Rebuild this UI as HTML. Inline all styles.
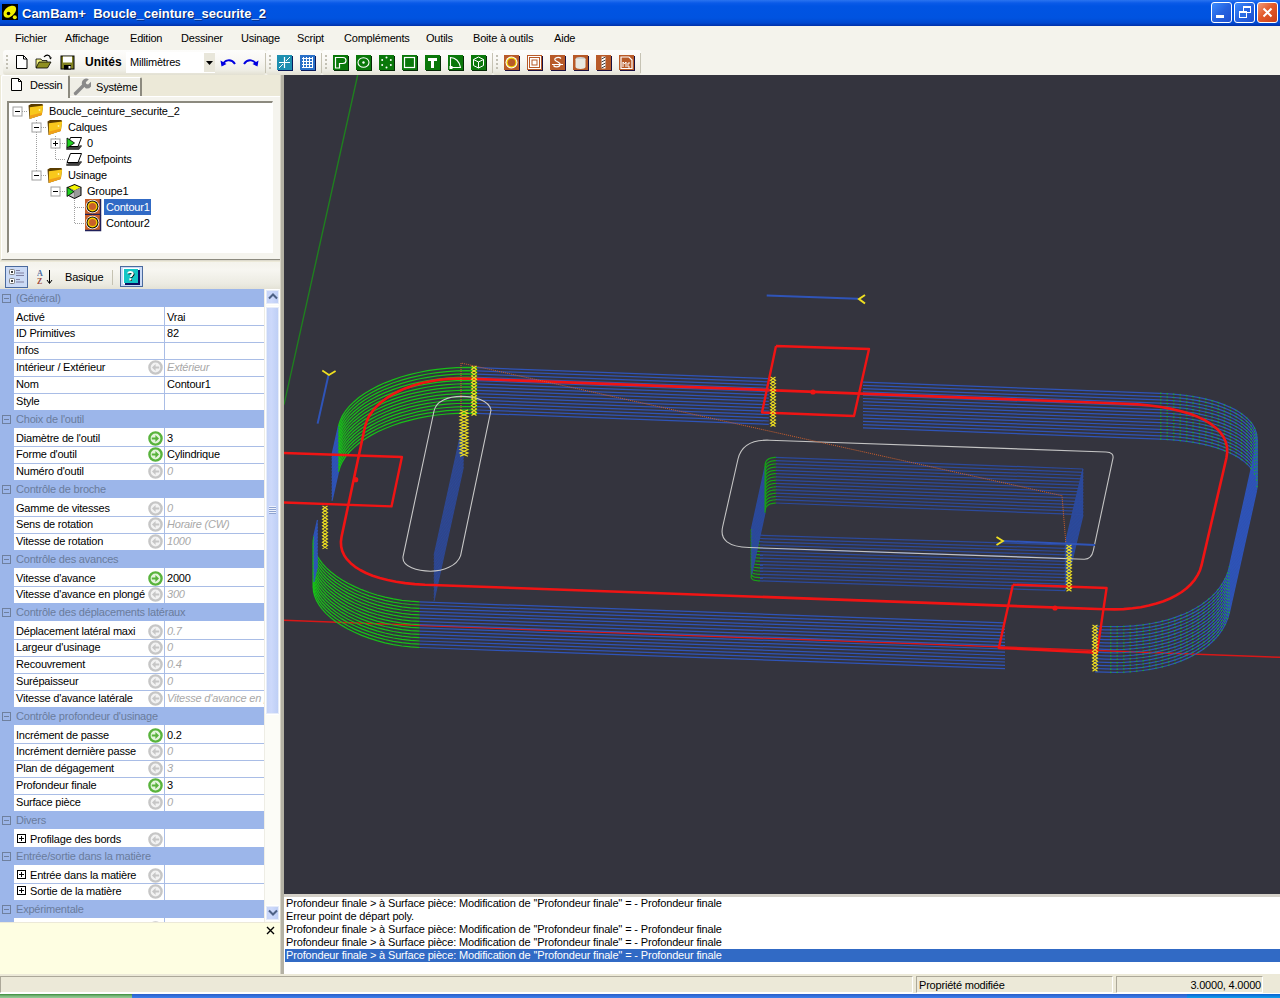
<!DOCTYPE html>
<html><head><meta charset="utf-8"><style>
*{box-sizing:border-box;margin:0;padding:0}
html,body{width:1280px;height:998px;overflow:hidden;background:#ece9d8;font-family:"Liberation Sans",sans-serif;font-size:11px;color:#000;letter-spacing:-0.2px}
.a{position:absolute}
.nw{white-space:nowrap}
#title{left:0;top:0;width:1280px;height:26px;background:linear-gradient(#2a74f0 0,#0a5ae8 3px,#0054e3 6px,#0053e0 18px,#0048d0 23px,#0030a8 26px)}
#title .t{left:22px;top:6px;color:#fff;font-weight:bold;font-size:13px;letter-spacing:0;text-shadow:1px 1px 0 #0a246a}
.wb{position:absolute;top:2px;width:21px;height:21px;border:1px solid #fff;border-radius:3px}
#menu{left:0;top:26px;width:1280px;height:49px;background:#f4f3ec}
#menu span{position:absolute;top:6px}
.tbar{position:absolute;top:24px;height:25px;background:linear-gradient(#fdfdfb 0,#f9f8f4 40%,#efeee6 80%,#e2e0d2 100%);border-radius:3px}
.tbar:after{content:"";position:absolute;right:0;top:3px;width:1px;height:20px;background:#c6c3b4}
.grip{position:absolute;top:5px;width:2px;height:14px;background:repeating-linear-gradient(#c2c0b4 0 2px,transparent 2px 4px)}
.ti{position:absolute;top:5px;width:16px;height:16px}
#left{left:0;top:75px;width:281px;height:899px;background:#ece9d8}
#vp{left:284px;top:75px;width:996px;height:819px;background:#34343e;overflow:hidden}
.ll{position:absolute;left:1px;height:13px;line-height:13px;white-space:nowrap;padding-left:1px;letter-spacing:-0.16px}
.cat{position:absolute;left:0;width:264px;height:18px;background:#9cb6ea;color:#6a7c9c}
.cat .tx{position:absolute;left:16px;top:3px;white-space:nowrap}
.cat .bx{position:absolute;left:2px;top:5px;width:9px;height:9px;border:1px solid #6f809e}
.cat .bx:after{content:"";position:absolute;left:1px;top:3px;width:5px;height:1px;background:#6f809e}
.row{position:absolute;left:0;width:264px;height:17px;background:#fff;border-left:14px solid #9cb6ea}
.ln{position:absolute;left:0;top:0;width:250px;height:1px;background:#a9bde6}
.vl{position:absolute;left:150px;top:0;width:1px;height:100%;background:#a9bde6}
.row .n{position:absolute;left:0;top:0;width:134px;height:16px;padding-left:2px;line-height:16px;white-space:nowrap;overflow:visible}
.row .v{position:absolute;left:151px;top:0;width:99px;height:16px;padding-left:2px;line-height:16px;white-space:nowrap;overflow:hidden}
.row .g{color:#a8a8a8;font-style:italic}
.ic{position:absolute;left:134px;top:1px;width:15px;height:15px;background:#fff}
.pl{position:absolute;left:3px;top:3px;width:9px;height:9px;border:1px solid #000}
.pl:before{content:"";position:absolute;left:1px;top:3px;width:5px;height:1px;background:#000}
.pl:after{content:"";position:absolute;left:3px;top:1px;width:1px;height:5px;background:#000}
.tt{line-height:16px;white-space:nowrap}
.sp{position:absolute;top:2px;height:17px;border:1px solid;border-color:#aca899 #fff #fff #aca899;padding:2px 0 0 2px;white-space:nowrap}
</style></head><body>
<div id="title" class="a"><svg class="a" style="left:2px;top:4px" width="16" height="16" viewBox="0 0 16 16"><rect width="16" height="16" fill="#000"/><path d="M1.5 10c0-3.5 3.5-7.5 8-8.2c3.2-0.5 5 1.2 4.6 3.8c-0.4 3.2-3 6.5-6.8 7.8c-3.2 1-5.8-0.4-5.8-3.4z" fill="#f2f000"/><circle cx="6.5" cy="9.5" r="1.8" fill="#000"/><circle cx="12.8" cy="13.2" r="2" fill="#f2f000"/></svg><div class="a t nw">CamBam+&nbsp; Boucle_ceinture_securite_2</div><div class="wb" style="left:1211px;background:linear-gradient(135deg,#3c8cff 0%,#2663e0 50%,#1d4fd0 100%)"><div class="a" style="left:4px;top:12px;width:8px;height:3px;background:#fff"></div></div><div class="wb" style="left:1234px;background:linear-gradient(135deg,#3c8cff 0%,#2663e0 50%,#1d4fd0 100%)"><div class="a" style="left:8px;top:3px;width:8px;height:7px;border:1px solid #fff;border-top-width:2px"></div><div class="a" style="left:4px;top:8px;width:8px;height:7px;border:1px solid #fff;border-top-width:2px;background:#2a6be4"></div></div><div class="wb" style="left:1257px;background:linear-gradient(135deg,#f09a7a 0%,#e35a2a 45%,#c8401a 100%)"><svg class="a" style="left:4px;top:4px" width="11" height="11"><path d="M1.5 1.5l8 8M9.5 1.5l-8 8" stroke="#fff" stroke-width="2"/></svg></div></div>
<div id="menu" class="a"><span class="nw" style="left:15px">Fichier</span><span class="nw" style="left:65px">Affichage</span><span class="nw" style="left:130px">Edition</span><span class="nw" style="left:181px">Dessiner</span><span class="nw" style="left:241px">Usinage</span><span class="nw" style="left:297px">Script</span><span class="nw" style="left:344px">Compléments</span><span class="nw" style="left:426px">Outils</span><span class="nw" style="left:473px">Boite à outils</span><span class="nw" style="left:554px">Aide</span><div class="tbar" style="left:3px;width:263px"></div><div class="grip" style="left:6px;top:29px"></div><div class="tbar" style="left:266px;width:56px"></div><div class="grip" style="left:269px;top:29px"></div><div class="tbar" style="left:322px;width:171px"></div><div class="grip" style="left:325px;top:29px"></div><div class="tbar" style="left:493px;width:148px"></div><div class="grip" style="left:496px;top:29px"></div></div>
<svg class="a" style="left:16px;top:55px" width="12" height="14" viewBox="0 0 12 14"><path d="M0.5 0.5h7l3.5 3.5v9.5h-10.5z" fill="#fff" stroke="#000"/><path d="M7.5 0.5v3.5h3.5" fill="none" stroke="#000"/></svg><svg class="a" style="left:35px;top:54px" width="18" height="15" viewBox="0 0 18 15"><path d="M1 5h5l1 1.5h5v7h-11z" fill="#f0f080" stroke="#000" stroke-width="0.8"/><path d="M1 14l3-6h12l-3.5 6z" fill="#8f8f20" stroke="#000" stroke-width="0.8"/><path d="M9 3c2-2.5 5-2.5 6.5 0.5" fill="none" stroke="#000" stroke-width="1.2"/><path d="M14 3.5h3l-1.5 2z" fill="#000"/></svg><svg class="a" style="left:60px;top:55px" width="15" height="15" viewBox="0 0 15 15"><rect x="0.5" y="0.5" width="14" height="14" fill="#000"/><rect x="1.5" y="1.5" width="12" height="12" fill="#808020"/><rect x="3" y="1.5" width="9" height="6" fill="#fff"/><rect x="4" y="10" width="7" height="4.5" fill="#000"/><rect x="8.5" y="11" width="2" height="2.5" fill="#fff"/></svg><div class="a nw" style="left:85px;top:55px;font-weight:bold;font-size:12px;letter-spacing:0">Unités</div><div class="a" style="left:126px;top:52px;width:89px;height:21px;background:#fff"></div><div class="a" style="left:204px;top:53px;width:11px;height:19px;background:#e8e6da"></div><div class="a nw" style="left:130px;top:56px">Millimètres</div><svg class="a" style="left:206px;top:61px" width="7" height="4" viewBox="0 0 7 4"><path d="M0 0h7l-3.5 4z" fill="#000"/></svg><svg class="a" style="left:220px;top:56px" width="16" height="11" viewBox="0 0 16 11"><path d="M3 9c1-5 8-7 12-1" fill="none" stroke="#0000e0" stroke-width="2"/><path d="M0.5 4.5l1 6l5-2.5z" fill="#0000e0"/></svg><svg class="a" style="left:243px;top:56px" width="16" height="11" viewBox="0 0 16 11"><path d="M13 9c-1-5-8-7-12-1" fill="none" stroke="#0000e0" stroke-width="2"/><path d="M15.5 4.5l-1 6l-5-2.5z" fill="#0000e0"/></svg><svg class="a" style="left:277px;top:55px" width="16" height="16" viewBox="0 0 16 16"><rect x="1" y="1" width="15" height="15" fill="#0a1a5a"/><rect x="0" y="0" width="15" height="15" fill="#1e8fb0"/><path d="M7.5 2v11M2 7.5h11" stroke="#fff" stroke-width="1.2"/><path d="M9 6l4-4M6 9l-4 4" stroke="#fff" stroke-width="1"/></svg><svg class="a" style="left:300px;top:55px" width="16" height="16" viewBox="0 0 16 16"><rect x="1" y="1" width="15" height="15" fill="#0a1a5a"/><rect x="0" y="0" width="15" height="15" fill="#2a70c8"/><path d="M2 3.5h11M2 6.5h11M2 9.5h11M2 12.5h11M3.5 2v11M6.5 2v11M9.5 2v11M12.5 2v11" stroke="#fff" stroke-width="1"/></svg><svg class="a" style="left:333px;top:55px" width="16" height="16" viewBox="0 0 16 16"><rect x="1" y="1" width="15" height="15" fill="#062a06"/><rect x="0" y="0" width="15" height="15" fill="#0a780a"/><path d="M2.5 2.5h7.5a3 3 0 0 1 0 6h-3.5v4.5h-4z" fill="none" stroke="#fff" stroke-width="1.2"/></svg><svg class="a" style="left:356px;top:55px" width="16" height="16" viewBox="0 0 16 16"><rect x="1" y="1" width="15" height="15" fill="#062a06"/><rect x="0" y="0" width="15" height="15" fill="#0a780a"/><ellipse cx="7.5" cy="7.5" rx="5.5" ry="4.8" fill="none" stroke="#fff" stroke-width="1.1"/><circle cx="7.5" cy="7.5" r="1.2" fill="#fff"/></svg><svg class="a" style="left:379px;top:55px" width="16" height="16" viewBox="0 0 16 16"><rect x="1" y="1" width="15" height="15" fill="#062a06"/><rect x="0" y="0" width="15" height="15" fill="#0a780a"/><g fill="#fff"><circle cx="7.5" cy="2.5" r="1"/><circle cx="3.2" cy="5" r="1"/><circle cx="11.8" cy="5" r="1"/><circle cx="3.2" cy="10" r="1"/><circle cx="11.8" cy="10" r="1"/><circle cx="7.5" cy="12.5" r="1"/></g></svg><svg class="a" style="left:402px;top:55px" width="16" height="16" viewBox="0 0 16 16"><rect x="1" y="1" width="15" height="15" fill="#062a06"/><rect x="0" y="0" width="15" height="15" fill="#0a780a"/><rect x="2.5" y="2.5" width="10" height="10" fill="none" stroke="#fff" stroke-width="1.2"/></svg><svg class="a" style="left:425px;top:55px" width="16" height="16" viewBox="0 0 16 16"><rect x="1" y="1" width="15" height="15" fill="#062a06"/><rect x="0" y="0" width="15" height="15" fill="#0a780a"/><path d="M3 3h9v3h-3v7h-3v-7h-3z" fill="#fff"/></svg><svg class="a" style="left:448px;top:55px" width="16" height="16" viewBox="0 0 16 16"><rect x="1" y="1" width="15" height="15" fill="#062a06"/><rect x="0" y="0" width="15" height="15" fill="#0a780a"/><path d="M2.5 12.5v-10c5 0 9 4 10 10z" fill="none" stroke="#fff" stroke-width="1.1"/><rect x="1.5" y="11" width="3" height="3" fill="#fff"/></svg><svg class="a" style="left:471px;top:55px" width="16" height="16" viewBox="0 0 16 16"><rect x="1" y="1" width="15" height="15" fill="#062a06"/><rect x="0" y="0" width="15" height="15" fill="#0a780a"/><path d="M7.5 2l5 2.5v6l-5 2.5l-5-2.5v-6z M2.5 4.5l5 2.5l5-2.5 M7.5 7v6" fill="none" stroke="#fff" stroke-width="1"/></svg><svg class="a" style="left:504px;top:55px" width="16" height="16" viewBox="0 0 16 16"><rect x="1" y="1" width="15" height="15" fill="#1a1040"/><rect x="0" y="0" width="15" height="15" fill="#b85a28"/><circle cx="7.5" cy="7.5" r="6" fill="#fff"/><circle cx="7.5" cy="7.5" r="5" fill="#f0d000"/><circle cx="7.5" cy="7.5" r="3.8" fill="#b85a28"/></svg><svg class="a" style="left:527px;top:55px" width="16" height="16" viewBox="0 0 16 16"><rect x="1" y="1" width="15" height="15" fill="#1a1040"/><rect x="0" y="0" width="15" height="15" fill="#fff"/><rect x="0.5" y="0.5" width="14" height="14" fill="none" stroke="#b85a28"/><rect x="2.5" y="2.5" width="10" height="10" fill="none" stroke="#b85a28"/><rect x="5" y="5" width="5" height="5" fill="none" stroke="#b85a28"/></svg><svg class="a" style="left:550px;top:55px" width="16" height="16" viewBox="0 0 16 16"><rect x="1" y="1" width="15" height="15" fill="#1a1040"/><rect x="0" y="0" width="15" height="15" fill="#b85a28"/><path d="M11 3.5c-2-2-7-1-6 1.5c1 2 6 2 5 5c-0.8 2.5-5 2.5-6.5 0.5" fill="none" stroke="#fff" stroke-width="1.3"/><path d="M2 9.5h11" stroke="#fff" stroke-width="1"/></svg><svg class="a" style="left:573px;top:55px" width="16" height="16" viewBox="0 0 16 16"><rect x="1" y="1" width="15" height="15" fill="#1a1040"/><rect x="0" y="0" width="15" height="15" fill="#b85a28"/><ellipse cx="7.5" cy="4" rx="5" ry="2" fill="#d0d0d0"/><path d="M2.5 4v8c0 2.5 10 2.5 10 0v-8" fill="#e8e8e0"/></svg><svg class="a" style="left:596px;top:55px" width="16" height="16" viewBox="0 0 16 16"><rect x="1" y="1" width="15" height="15" fill="#1a1040"/><rect x="0" y="0" width="15" height="15" fill="#b85a28"/><rect x="5.5" y="1.5" width="4" height="12" fill="#fff"/><path d="M5.5 4l4-2M5.5 7l4-2M5.5 10l4-2M5.5 13l4-2" stroke="#404040" stroke-width="1"/></svg><svg class="a" style="left:619px;top:55px" width="16" height="16" viewBox="0 0 16 16"><rect x="1" y="1" width="15" height="15" fill="#1a1040"/><rect x="0" y="0" width="15" height="15" fill="#b85a28"/><path d="M2 2h8l3 3v8.5h-11z" fill="none" stroke="#fff" stroke-width="1.2"/><path d="M4 12v-5l1.5 2l1.5-2v5M11 8h-2v4h2" fill="none" stroke="#fff" stroke-width="1"/></svg>
<div id="left" class="a"></div><div class="a" style="left:1px;top:96px;width:280px;height:164px;background:#f5f4ee;border-left:1px solid #fff;border-top:1px solid #fff;border-right:1px solid #8c8a7f;border-bottom:1px solid #8c8a7f"></div><div class="a" style="left:1px;top:260px;width:280px;height:1px;background:#dcd9cc"></div><div class="a" style="left:1px;top:75px;width:69px;height:23px;background:#f5f4ee;border-left:1px solid #fff;border-top:1px solid #fff;border-right:2px solid #8c8a7f;border-radius:2px 2px 0 0"></div><div class="a" style="left:70px;top:77px;width:72px;height:19px;background:#efeee6;border-top:1px solid #fff;border-right:2px solid #8c8a7f;border-radius:0 2px 0 0"></div><svg class="a" style="left:11px;top:78px" width="11" height="13" viewBox="0 0 11 13"><path d="M0.5 0.5h7l3 3v9h-10z" fill="#fff" stroke="#000"/><path d="M7.5 0.5v3h3" fill="none" stroke="#000"/></svg><div class="a nw" style="left:30px;top:79px">Dessin</div><svg class="a" style="left:73px;top:78px" width="18" height="18" viewBox="0 0 18 18"><path d="M2.5 15.5l8.5-8.5" stroke="#8a8a8a" stroke-width="3.4" stroke-linecap="round"/><path d="M9 6.5a4.6 4.6 0 0 1 6.8-5.2l-3 3l0.5 1.8l1.8 0.5l3-3a4.6 4.6 0 0 1-5.2 6.8z" fill="#8a8a8a"/></svg><div class="a nw" style="left:96px;top:81px">Système</div><div class="a" style="left:7px;top:101px;width:266px;height:152px;background:#fff;border-top:2px solid #8c8a7f;border-left:2px solid #8c8a7f;border-right:1px solid #fff;border-bottom:1px solid #fff"></div><svg class="a" style="left:0px;top:0px" width="281" height="260" viewBox="0 0 281 260"><path d="M36.5 120v55M55.5 136v23M74.5 200v23" stroke="#a0a0a0" stroke-dasharray="1 1" stroke-width="1" fill="none"/><path d="M22 111.5h6M41 127.5h6M41 175.5h6M60 143.5h6M56 159.5h10M60 191.5h6M75 207.5h10M75 223.5h10" stroke="#a0a0a0" stroke-dasharray="1 1" stroke-width="1" fill="none"/><rect x="13.0" y="107.0" width="9" height="9" fill="#fff" stroke="#a0a0a0"/><path d="M15.0 111.5h5" stroke="#000"/><rect x="32.0" y="123.0" width="9" height="9" fill="#fff" stroke="#a0a0a0"/><path d="M34.0 127.5h5" stroke="#000"/><rect x="51.0" y="139.0" width="9" height="9" fill="#fff" stroke="#a0a0a0"/><path d="M53.0 143.5h5" stroke="#000"/><path d="M55.5 141.0v5" stroke="#000"/><rect x="32.0" y="171.0" width="9" height="9" fill="#fff" stroke="#a0a0a0"/><path d="M34.0 175.5h5" stroke="#000"/><rect x="51.0" y="187.0" width="9" height="9" fill="#fff" stroke="#a0a0a0"/><path d="M53.0 191.5h5" stroke="#000"/><g transform="translate(28,103)"><path d="M0.5 2.5L3 1h11.5l0.5 1.5l-1.2 9.5l-12.3 4z" fill="#5a3c00"/><path d="M1.8 4.2l13.4-1.6l-1.3 9.2l-12 4z" fill="#f8c81c"/><path d="M1.9 12.5l12.2-3l-0.3 2.4l-11.9 3.9z" fill="#f0a018"/><circle cx="11.5" cy="7" r="0.9" fill="#fff6a0"/></g><g transform="translate(47,119)"><path d="M0.5 2.5L3 1h11.5l0.5 1.5l-1.2 9.5l-12.3 4z" fill="#5a3c00"/><path d="M1.8 4.2l13.4-1.6l-1.3 9.2l-12 4z" fill="#f8c81c"/><path d="M1.9 12.5l12.2-3l-0.3 2.4l-11.9 3.9z" fill="#f0a018"/><circle cx="11.5" cy="7" r="0.9" fill="#fff6a0"/></g><g transform="translate(66,135)"><path d="M0.5 14.5l3-4h12l-2.5 4z" fill="#404040"/><path d="M4.5 2.5h11l-3.5 9h-11z" fill="#fff" stroke="#000"/><path d="M1 12.5v1.5h11.5l3-3.5" fill="none" stroke="#404040" stroke-width="1.5"/><path d="M1 3v10l7.5-5z" fill="#20d020" stroke="#000" stroke-width="0.8"/></g><g transform="translate(66,151)"><path d="M0.5 14.5l3-4h12l-2.5 4z" fill="#404040"/><path d="M4.5 2.5h11l-3.5 9h-11z" fill="#fff" stroke="#000"/><path d="M1 12.5v1.5h11.5l3-3.5" fill="none" stroke="#404040" stroke-width="1.5"/></g><g transform="translate(47,167)"><path d="M0.5 2.5L3 1h11.5l0.5 1.5l-1.2 9.5l-12.3 4z" fill="#5a3c00"/><path d="M1.8 4.2l13.4-1.6l-1.3 9.2l-12 4z" fill="#f8c81c"/><path d="M1.9 12.5l12.2-3l-0.3 2.4l-11.9 3.9z" fill="#f0a018"/><circle cx="11.5" cy="7" r="0.9" fill="#fff6a0"/></g><g transform="translate(66,183)"><path d="M8.5 1l7 3v8.5l-7 3.5l-7-3.5v-8.5z" fill="#000"/><path d="M8.5 2l6 2.5l-6 3l-6-3z" fill="#f5f500"/><path d="M8.5 7.5l6-3v7.5l-6 3z" fill="#9a9a9a"/><path d="M2.5 4.5l6 3v7.5l-6-3z" fill="#c0c0c0"/><path d="M1 4v9.5l7-4.8z" fill="#20d020" stroke="#000" stroke-width="0.8"/></g><g transform="translate(85,199)"><rect x="0" y="0" width="16" height="16" fill="#c8602a"/><path d="M15.5 0v15.5h-15.5" fill="none" stroke="#20205a" stroke-width="1.5"/><circle cx="7.5" cy="7.5" r="6.8" fill="#fff"/><circle cx="7.5" cy="7.5" r="6" fill="#000"/><circle cx="7.5" cy="7.5" r="5" fill="#f5d000"/><circle cx="7.5" cy="7.5" r="3.6" fill="#c8602a"/></g><g transform="translate(85,215)"><rect x="0" y="0" width="16" height="16" fill="#c8602a"/><path d="M15.5 0v15.5h-15.5" fill="none" stroke="#20205a" stroke-width="1.5"/><circle cx="7.5" cy="7.5" r="6.8" fill="#fff"/><circle cx="7.5" cy="7.5" r="6" fill="#000"/><circle cx="7.5" cy="7.5" r="5" fill="#f5d000"/><circle cx="7.5" cy="7.5" r="3.6" fill="#c8602a"/></g></svg><div class="a" style="left:104px;top:199px;width:47px;height:16px;background:#316ac5"></div><div class="a tt" style="left:49px;top:103px;color:#000">Boucle_ceinture_securite_2</div><div class="a tt" style="left:68px;top:119px;color:#000">Calques</div><div class="a tt" style="left:87px;top:135px;color:#000">0</div><div class="a tt" style="left:87px;top:151px;color:#000">Defpoints</div><div class="a tt" style="left:68px;top:167px;color:#000">Usinage</div><div class="a tt" style="left:87px;top:183px;color:#000">Groupe1</div><div class="a tt" style="left:106px;top:199px;color:#fff">Contour1</div><div class="a tt" style="left:106px;top:215px;color:#000">Contour2</div><div class="a" style="left:0;top:262px;width:280px;height:27px;background:linear-gradient(#f4f3ec,#f7f6f1 30%,#ecebe2 80%,#e4e2d6)"></div><div class="a" style="left:5px;top:266px;width:23px;height:22px;background:#cbdaf5;border:1px solid #4a6a9e"></div><svg class="a" style="left:8px;top:268px" width="18" height="18" viewBox="0 0 18 18"><rect x="1.5" y="1.5" width="5" height="5" rx="1" fill="#fff" stroke="#808080"/><rect x="1.5" y="10.5" width="5" height="5" rx="1" fill="#fff" stroke="#808080"/><path d="M3 4h2M4 3v2M3 13h2M4 12v2" stroke="#000"/><path d="M8 2.5h4M8 5h8M8 7.5h8M8 11.5h4M8 14h8" stroke="#8080a0"/></svg><svg class="a" style="left:37px;top:269px" width="17" height="16" viewBox="0 0 17 16"><text x="0" y="7" font-family="Liberation Serif" font-weight="bold" font-size="8" fill="#4a6aa0">A</text><text x="0" y="15" font-family="Liberation Serif" font-weight="bold" font-size="8" fill="#a04a3a">Z</text><path d="M12.5 1v13" stroke="#000"/><path d="M10 11l2.5 3.5l2.5-3.5" fill="none" stroke="#000"/></svg><div class="a nw" style="left:65px;top:271px">Basique</div><div class="a" style="left:112px;top:270px;width:1px;height:15px;background:#c5c2b2"></div><div class="a" style="left:120px;top:266px;width:23px;height:21px;background:#cbdaf5;border:1px solid #4a6a9e"></div><svg class="a" style="left:123px;top:268px" width="17" height="17" viewBox="0 0 17 17"><rect x="0" y="0" width="16" height="16" fill="#fff"/><rect x="2" y="2" width="15" height="15" fill="#0a1060"/><rect x="1" y="1" width="14" height="14" fill="#14c6c6"/><path d="M6 6.2c0-2 4.5-2.2 4.5 0c0 1.6-2 1.8-2 3.6" fill="none" stroke="#000" stroke-width="2"/><path d="M5.3 5.5c0-2 4.5-2.2 4.5 0c0 1.6-2 1.8-2 3.6" fill="none" stroke="#fff" stroke-width="2"/><rect x="6.8" y="10.8" width="2.2" height="2.2" fill="#000"/><rect x="6.3" y="10.3" width="2.2" height="2.2" fill="#fff"/></svg><div class="a" style="left:0;top:289px;width:264px;height:633px;overflow:hidden;background:#fff"><div class="cat" style="top:0px"><div class="bx"></div><div class="tx">(Général)</div></div><div class="row" style="top:18px;height:18px"><div class="vl"></div><div class="n" style="top:2px;">Activé</div><div class="v" style="top:2px">Vrai</div></div><div class="row" style="top:36px;height:17px"><div class="ln"></div><div class="vl"></div><div class="n" style="top:0px;">ID Primitives</div><div class="v" style="top:0px">82</div></div><div class="row" style="top:53px;height:17px"><div class="ln"></div><div class="vl"></div><div class="n" style="top:0px;">Infos</div><div class="v" style="top:0px"></div></div><div class="row" style="top:70px;height:17px"><div class="ln"></div><div class="vl"></div><div class="n" style="top:0px;">Intérieur / Extérieur</div><div class="ic" style="top:1px"><svg width="15" height="15" viewBox="0 0 15 15"><circle cx="7.5" cy="7.5" r="6.1" fill="#f2f2f2" stroke="#c6c6c6" stroke-width="2.4"/><path d="M11.2 6.4h-3.6v-2.4l-3.6 3.5l3.6 3.5v-2.4h3.6z" fill="#c6c6c6"/></svg></div><div class="v g" style="top:0px">Extérieur</div></div><div class="row" style="top:87px;height:17px"><div class="ln"></div><div class="vl"></div><div class="n" style="top:0px;">Nom</div><div class="v" style="top:0px">Contour1</div></div><div class="row" style="top:104px;height:17px"><div class="ln"></div><div class="vl"></div><div class="n" style="top:0px;">Style</div><div class="v" style="top:0px"></div></div><div class="cat" style="top:121px"><div class="bx"></div><div class="tx">Choix de l'outil</div></div><div class="row" style="top:139px;height:18px"><div class="vl"></div><div class="n" style="top:2px;">Diamètre de l'outil</div><div class="ic" style="top:3px"><svg width="15" height="15" viewBox="0 0 15 15"><circle cx="7.5" cy="7.5" r="6.1" fill="#e4f4dc" stroke="#58b33c" stroke-width="2.4"/><path d="M3.8 6.4h3.6v-2.4l3.6 3.5l-3.6 3.5v-2.4h-3.6z" fill="#58b33c"/></svg></div><div class="v" style="top:2px">3</div></div><div class="row" style="top:157px;height:17px"><div class="ln"></div><div class="vl"></div><div class="n" style="top:0px;">Forme d'outil</div><div class="ic" style="top:1px"><svg width="15" height="15" viewBox="0 0 15 15"><circle cx="7.5" cy="7.5" r="6.1" fill="#e4f4dc" stroke="#58b33c" stroke-width="2.4"/><path d="M3.8 6.4h3.6v-2.4l3.6 3.5l-3.6 3.5v-2.4h-3.6z" fill="#58b33c"/></svg></div><div class="v" style="top:0px">Cylindrique</div></div><div class="row" style="top:174px;height:17px"><div class="ln"></div><div class="vl"></div><div class="n" style="top:0px;">Numéro d'outil</div><div class="ic" style="top:1px"><svg width="15" height="15" viewBox="0 0 15 15"><circle cx="7.5" cy="7.5" r="6.1" fill="#f2f2f2" stroke="#c6c6c6" stroke-width="2.4"/><path d="M11.2 6.4h-3.6v-2.4l-3.6 3.5l3.6 3.5v-2.4h3.6z" fill="#c6c6c6"/></svg></div><div class="v g" style="top:0px">0</div></div><div class="cat" style="top:191px"><div class="bx"></div><div class="tx">Contrôle de broche</div></div><div class="row" style="top:209px;height:18px"><div class="vl"></div><div class="n" style="top:2px;">Gamme de vitesses</div><div class="ic" style="top:3px"><svg width="15" height="15" viewBox="0 0 15 15"><circle cx="7.5" cy="7.5" r="6.1" fill="#f2f2f2" stroke="#c6c6c6" stroke-width="2.4"/><path d="M11.2 6.4h-3.6v-2.4l-3.6 3.5l3.6 3.5v-2.4h3.6z" fill="#c6c6c6"/></svg></div><div class="v g" style="top:2px">0</div></div><div class="row" style="top:227px;height:17px"><div class="ln"></div><div class="vl"></div><div class="n" style="top:0px;">Sens de rotation</div><div class="ic" style="top:1px"><svg width="15" height="15" viewBox="0 0 15 15"><circle cx="7.5" cy="7.5" r="6.1" fill="#f2f2f2" stroke="#c6c6c6" stroke-width="2.4"/><path d="M11.2 6.4h-3.6v-2.4l-3.6 3.5l3.6 3.5v-2.4h3.6z" fill="#c6c6c6"/></svg></div><div class="v g" style="top:0px">Horaire (CW)</div></div><div class="row" style="top:244px;height:17px"><div class="ln"></div><div class="vl"></div><div class="n" style="top:0px;">Vitesse de rotation</div><div class="ic" style="top:1px"><svg width="15" height="15" viewBox="0 0 15 15"><circle cx="7.5" cy="7.5" r="6.1" fill="#f2f2f2" stroke="#c6c6c6" stroke-width="2.4"/><path d="M11.2 6.4h-3.6v-2.4l-3.6 3.5l3.6 3.5v-2.4h3.6z" fill="#c6c6c6"/></svg></div><div class="v g" style="top:0px">1000</div></div><div class="cat" style="top:261px"><div class="bx"></div><div class="tx">Contrôle des avances</div></div><div class="row" style="top:279px;height:18px"><div class="vl"></div><div class="n" style="top:2px;">Vitesse d'avance</div><div class="ic" style="top:3px"><svg width="15" height="15" viewBox="0 0 15 15"><circle cx="7.5" cy="7.5" r="6.1" fill="#e4f4dc" stroke="#58b33c" stroke-width="2.4"/><path d="M3.8 6.4h3.6v-2.4l3.6 3.5l-3.6 3.5v-2.4h-3.6z" fill="#58b33c"/></svg></div><div class="v" style="top:2px">2000</div></div><div class="row" style="top:297px;height:17px"><div class="ln"></div><div class="vl"></div><div class="n" style="top:0px;">Vitesse d'avance en plongé</div><div class="ic" style="top:1px"><svg width="15" height="15" viewBox="0 0 15 15"><circle cx="7.5" cy="7.5" r="6.1" fill="#f2f2f2" stroke="#c6c6c6" stroke-width="2.4"/><path d="M11.2 6.4h-3.6v-2.4l-3.6 3.5l3.6 3.5v-2.4h3.6z" fill="#c6c6c6"/></svg></div><div class="v g" style="top:0px">300</div></div><div class="cat" style="top:314px"><div class="bx"></div><div class="tx">Contrôle des déplacements latéraux</div></div><div class="row" style="top:332px;height:18px"><div class="vl"></div><div class="n" style="top:2px;">Déplacement latéral maxi</div><div class="ic" style="top:3px"><svg width="15" height="15" viewBox="0 0 15 15"><circle cx="7.5" cy="7.5" r="6.1" fill="#f2f2f2" stroke="#c6c6c6" stroke-width="2.4"/><path d="M11.2 6.4h-3.6v-2.4l-3.6 3.5l3.6 3.5v-2.4h3.6z" fill="#c6c6c6"/></svg></div><div class="v g" style="top:2px">0.7</div></div><div class="row" style="top:350px;height:17px"><div class="ln"></div><div class="vl"></div><div class="n" style="top:0px;">Largeur d'usinage</div><div class="ic" style="top:1px"><svg width="15" height="15" viewBox="0 0 15 15"><circle cx="7.5" cy="7.5" r="6.1" fill="#f2f2f2" stroke="#c6c6c6" stroke-width="2.4"/><path d="M11.2 6.4h-3.6v-2.4l-3.6 3.5l3.6 3.5v-2.4h3.6z" fill="#c6c6c6"/></svg></div><div class="v g" style="top:0px">0</div></div><div class="row" style="top:367px;height:17px"><div class="ln"></div><div class="vl"></div><div class="n" style="top:0px;">Recouvrement</div><div class="ic" style="top:1px"><svg width="15" height="15" viewBox="0 0 15 15"><circle cx="7.5" cy="7.5" r="6.1" fill="#f2f2f2" stroke="#c6c6c6" stroke-width="2.4"/><path d="M11.2 6.4h-3.6v-2.4l-3.6 3.5l3.6 3.5v-2.4h3.6z" fill="#c6c6c6"/></svg></div><div class="v g" style="top:0px">0.4</div></div><div class="row" style="top:384px;height:17px"><div class="ln"></div><div class="vl"></div><div class="n" style="top:0px;">Surépaisseur</div><div class="ic" style="top:1px"><svg width="15" height="15" viewBox="0 0 15 15"><circle cx="7.5" cy="7.5" r="6.1" fill="#f2f2f2" stroke="#c6c6c6" stroke-width="2.4"/><path d="M11.2 6.4h-3.6v-2.4l-3.6 3.5l3.6 3.5v-2.4h3.6z" fill="#c6c6c6"/></svg></div><div class="v g" style="top:0px">0</div></div><div class="row" style="top:401px;height:17px"><div class="ln"></div><div class="vl"></div><div class="n" style="top:0px;">Vitesse d'avance latérale</div><div class="ic" style="top:1px"><svg width="15" height="15" viewBox="0 0 15 15"><circle cx="7.5" cy="7.5" r="6.1" fill="#f2f2f2" stroke="#c6c6c6" stroke-width="2.4"/><path d="M11.2 6.4h-3.6v-2.4l-3.6 3.5l3.6 3.5v-2.4h3.6z" fill="#c6c6c6"/></svg></div><div class="v g" style="top:0px">Vitesse d'avance en plongé</div></div><div class="cat" style="top:418px"><div class="bx"></div><div class="tx">Contrôle profondeur d'usinage</div></div><div class="row" style="top:436px;height:18px"><div class="vl"></div><div class="n" style="top:2px;">Incrément de passe</div><div class="ic" style="top:3px"><svg width="15" height="15" viewBox="0 0 15 15"><circle cx="7.5" cy="7.5" r="6.1" fill="#e4f4dc" stroke="#58b33c" stroke-width="2.4"/><path d="M3.8 6.4h3.6v-2.4l3.6 3.5l-3.6 3.5v-2.4h-3.6z" fill="#58b33c"/></svg></div><div class="v" style="top:2px">0.2</div></div><div class="row" style="top:454px;height:17px"><div class="ln"></div><div class="vl"></div><div class="n" style="top:0px;">Incrément dernière passe</div><div class="ic" style="top:1px"><svg width="15" height="15" viewBox="0 0 15 15"><circle cx="7.5" cy="7.5" r="6.1" fill="#f2f2f2" stroke="#c6c6c6" stroke-width="2.4"/><path d="M11.2 6.4h-3.6v-2.4l-3.6 3.5l3.6 3.5v-2.4h3.6z" fill="#c6c6c6"/></svg></div><div class="v g" style="top:0px">0</div></div><div class="row" style="top:471px;height:17px"><div class="ln"></div><div class="vl"></div><div class="n" style="top:0px;">Plan de dégagement</div><div class="ic" style="top:1px"><svg width="15" height="15" viewBox="0 0 15 15"><circle cx="7.5" cy="7.5" r="6.1" fill="#f2f2f2" stroke="#c6c6c6" stroke-width="2.4"/><path d="M11.2 6.4h-3.6v-2.4l-3.6 3.5l3.6 3.5v-2.4h3.6z" fill="#c6c6c6"/></svg></div><div class="v g" style="top:0px">3</div></div><div class="row" style="top:488px;height:17px"><div class="ln"></div><div class="vl"></div><div class="n" style="top:0px;">Profondeur finale</div><div class="ic" style="top:1px"><svg width="15" height="15" viewBox="0 0 15 15"><circle cx="7.5" cy="7.5" r="6.1" fill="#e4f4dc" stroke="#58b33c" stroke-width="2.4"/><path d="M3.8 6.4h3.6v-2.4l3.6 3.5l-3.6 3.5v-2.4h-3.6z" fill="#58b33c"/></svg></div><div class="v" style="top:0px">3</div></div><div class="row" style="top:505px;height:17px"><div class="ln"></div><div class="vl"></div><div class="n" style="top:0px;">Surface pièce</div><div class="ic" style="top:1px"><svg width="15" height="15" viewBox="0 0 15 15"><circle cx="7.5" cy="7.5" r="6.1" fill="#f2f2f2" stroke="#c6c6c6" stroke-width="2.4"/><path d="M11.2 6.4h-3.6v-2.4l-3.6 3.5l3.6 3.5v-2.4h3.6z" fill="#c6c6c6"/></svg></div><div class="v g" style="top:0px">0</div></div><div class="cat" style="top:522px"><div class="bx"></div><div class="tx">Divers</div></div><div class="row" style="top:540px;height:18px"><div class="vl"></div><div class="n" style="top:2px;padding-left:16px;">Profilage des bords</div><i class="pl" style="top:5px"></i><div class="ic" style="top:3px"><svg width="15" height="15" viewBox="0 0 15 15"><circle cx="7.5" cy="7.5" r="6.1" fill="#f2f2f2" stroke="#c6c6c6" stroke-width="2.4"/><path d="M11.2 6.4h-3.6v-2.4l-3.6 3.5l3.6 3.5v-2.4h3.6z" fill="#c6c6c6"/></svg></div><div class="v g" style="top:2px"></div></div><div class="cat" style="top:558px"><div class="bx"></div><div class="tx">Entrée/sortie dans la matière</div></div><div class="row" style="top:576px;height:18px"><div class="vl"></div><div class="n" style="top:2px;padding-left:16px;">Entrée dans la matière</div><i class="pl" style="top:5px"></i><div class="ic" style="top:3px"><svg width="15" height="15" viewBox="0 0 15 15"><circle cx="7.5" cy="7.5" r="6.1" fill="#f2f2f2" stroke="#c6c6c6" stroke-width="2.4"/><path d="M11.2 6.4h-3.6v-2.4l-3.6 3.5l3.6 3.5v-2.4h3.6z" fill="#c6c6c6"/></svg></div><div class="v g" style="top:2px"></div></div><div class="row" style="top:594px;height:17px"><div class="ln"></div><div class="vl"></div><div class="n" style="top:0px;padding-left:16px;">Sortie de la matière</div><i class="pl" style="top:3px"></i><div class="ic" style="top:1px"><svg width="15" height="15" viewBox="0 0 15 15"><circle cx="7.5" cy="7.5" r="6.1" fill="#f2f2f2" stroke="#c6c6c6" stroke-width="2.4"/><path d="M11.2 6.4h-3.6v-2.4l-3.6 3.5l3.6 3.5v-2.4h3.6z" fill="#c6c6c6"/></svg></div><div class="v g" style="top:0px"></div></div><div class="cat" style="top:611px"><div class="bx"></div><div class="tx">Expérimentale</div></div><div class="row" style="top:629px;height:18px"><div class="vl"></div><div class="n" style="top:2px;"></div><div class="ic" style="top:3px"><svg width="15" height="15" viewBox="0 0 15 15"><circle cx="7.5" cy="7.5" r="6.1" fill="#f2f2f2" stroke="#c6c6c6" stroke-width="2.4"/><path d="M11.2 6.4h-3.6v-2.4l-3.6 3.5l3.6 3.5v-2.4h3.6z" fill="#c6c6c6"/></svg></div><div class="v g" style="top:2px"></div></div></div><div class="a" style="left:264px;top:289px;width:17px;height:633px;background:#fcfcf7;border-left:1px solid #eeede5"></div><div class="a" style="left:265px;top:289px;width:15px;height:16px;background:linear-gradient(90deg,#c4d3f6,#cdd9fb 40%,#bccdf4);border:1px solid #fff;border-radius:2px;box-shadow:0 0 0 1px #e6ecf8 inset"></div><svg class="a" style="left:268px;top:293px" width="10" height="7" viewBox="0 0 10 7"><path d="M1 5.5l4-4l4 4" fill="none" stroke="#4d6185" stroke-width="2"/></svg><div class="a" style="left:265px;top:306px;width:15px;height:409px;background:linear-gradient(90deg,#c4d3f6,#cdd9fb 40%,#bccdf4);border:1px solid #fff;border-radius:2px;box-shadow:0 0 0 1px #e6ecf8 inset"></div><div class="a" style="left:269px;top:506px;width:7px;height:8px;background:repeating-linear-gradient(#eef2fd 0 1px,#8ea3d0 1px 2px)"></div><div class="a" style="left:265px;top:905px;width:15px;height:16px;background:linear-gradient(90deg,#c4d3f6,#cdd9fb 40%,#bccdf4);border:1px solid #fff;border-radius:2px;box-shadow:0 0 0 1px #e6ecf8 inset"></div><svg class="a" style="left:268px;top:909px" width="10" height="7" viewBox="0 0 10 7"><path d="M1 1.5l4 4l4-4" fill="none" stroke="#4d6185" stroke-width="2"/></svg><div class="a" style="left:0;top:922px;width:280px;height:52px;background:#fefee2;border-top:1px solid #ece9d8"></div><svg class="a" style="left:266px;top:926px" width="9" height="9" viewBox="0 0 9 9"><path d="M1 1l7 7M8 1l-7 7" stroke="#000" stroke-width="1.35"/></svg><div class="a" style="left:280px;top:75px;width:1px;height:899px;background:#d6d3c6"></div><div class="a" style="left:281px;top:75px;width:3px;height:899px;background:#b4b1a4"></div>
<div id="vp" class="a"><svg class="a" style="left:0;top:0" width="996" height="819" viewBox="0 0 996 819"><path d="M73.7 0.0 L0.0 329.7" stroke="#1f7f1f" stroke-width="1.4" fill="none"/>
<path d="M0.0 545.3 L996.0 582.3" stroke="#d81818" stroke-width="1.6" fill="none"/>
<path d="M193.0 292.6 L484.8 303.6" stroke="#2f54b8" stroke-width="1.25" fill="none"/>
<path d="M579.0 307.1 L876.0 318.4" stroke="#2f54b8" stroke-width="1.25" fill="none"/>
<path d="M972.5 370.0 L945.6 491.0" stroke="#2f54b8" stroke-width="1.25" fill="none"/>
<path d="M821.0 551.5 L811.0 551.1" stroke="#2f54b8" stroke-width="1.25" fill="none"/>
<path d="M721.0 547.9 L135.5 526.8" stroke="#2f54b8" stroke-width="1.25" fill="none"/>
<path d="M29.8 461.4 L33.5 445.0" stroke="#2f54b8" stroke-width="1.25" fill="none"/>
<path d="M48.0 380.0 L54.5 351.0" stroke="#2f54b8" stroke-width="1.25" fill="none"/>
<path d="M876.0 318.4 L885.4 318.9 L894.4 319.6 L903.0 320.6 L911.1 321.9 L918.9 323.4 L926.2 325.2 L933.0 327.2 L939.3 329.4 L945.1 331.8 L950.5 334.4 L955.3 337.2 L959.5 340.2 L963.2 343.4 L966.4 346.7 L968.9 350.2 L970.9 353.9 L972.3 357.7 L973.0 361.7 L973.1 365.8 L972.5 370.0" stroke="#2f54b8" stroke-width="1.25" fill="none"/>
<path d="M945.6 491.0 L944.1 496.7 L941.9 502.2 L939.2 507.4 L935.9 512.4 L932.1 517.1 L927.7 521.6 L922.8 525.8 L917.4 529.7 L911.6 533.3 L905.3 536.7 L898.5 539.7 L891.3 542.4 L883.7 544.8 L875.8 546.8 L867.5 548.5 L858.8 549.8 L849.8 550.8 L840.5 551.4 L830.9 551.7 L821.0 551.5" stroke="#2f54b8" stroke-width="1.25" fill="none"/>
<path d="M54.5 351.0 L56.1 345.9 L58.4 340.9 L61.5 336.0 L65.3 331.3 L69.8 326.9 L74.9 322.6 L80.6 318.5 L86.9 314.7 L93.7 311.1 L101.0 307.8 L108.7 304.8 L116.9 302.0 L125.5 299.6 L134.4 297.5 L143.6 295.7 L153.1 294.3 L162.8 293.3 L172.7 292.6 L182.8 292.4 L193.0 292.6" stroke="#18c018" stroke-width="1.25" fill="none"/>
<path d="M135.5 526.8 L126.6 526.2 L117.9 525.3 L109.3 523.9 L100.9 522.1 L92.9 520.0 L85.1 517.5 L77.6 514.7 L70.6 511.6 L63.9 508.3 L57.7 504.7 L52.0 501.0 L46.9 497.0 L42.3 492.9 L38.4 488.6 L35.1 484.2 L32.5 479.7 L30.6 475.2 L29.5 470.6 L29.2 466.0 L29.8 461.4" stroke="#18c018" stroke-width="1.25" fill="none"/>
<path d="M876.0 318.4 L885.4 318.9 L894.4 319.6 L903.0 320.6 L911.1 321.9 L918.9 323.4 L926.2 325.2 L933.0 327.2 L939.3 329.4 L945.1 331.8 L950.5 334.4 L955.3 337.2 L959.5 340.2 L963.2 343.4 L966.4 346.7 L968.9 350.2 L970.9 353.9 L972.3 357.7 L973.0 361.7 L973.1 365.8 L972.5 370.0" stroke="#18c018" stroke-width="1.25" fill="none" stroke-dasharray="1.5 5" stroke-opacity="0.8"/>
<path d="M945.6 491.0 L944.1 496.7 L941.9 502.2 L939.2 507.4 L935.9 512.4 L932.1 517.1 L927.7 521.6 L922.8 525.8 L917.4 529.7 L911.6 533.3 L905.3 536.7 L898.5 539.7 L891.3 542.4 L883.7 544.8 L875.8 546.8 L867.5 548.5 L858.8 549.8 L849.8 550.8 L840.5 551.4 L830.9 551.7 L821.0 551.5" stroke="#18c018" stroke-width="1.25" fill="none" stroke-dasharray="1.5 5" stroke-opacity="0.8"/>
<path d="M193.0 295.8 L484.8 306.8" stroke="#2f54b8" stroke-width="1.25" fill="none"/>
<path d="M579.0 310.4 L876.0 321.6" stroke="#2f54b8" stroke-width="1.25" fill="none"/>
<path d="M972.5 373.3 L945.6 494.3" stroke="#2f54b8" stroke-width="1.25" fill="none"/>
<path d="M821.0 554.8 L811.0 554.4" stroke="#2f54b8" stroke-width="1.25" fill="none"/>
<path d="M721.0 551.1 L135.5 530.0" stroke="#2f54b8" stroke-width="1.25" fill="none"/>
<path d="M29.8 464.7 L33.5 448.3" stroke="#2f54b8" stroke-width="1.25" fill="none"/>
<path d="M48.0 383.3 L54.5 354.3" stroke="#2f54b8" stroke-width="1.25" fill="none"/>
<path d="M876.0 321.6 L885.4 322.1 L894.4 322.9 L903.0 323.9 L911.1 325.2 L918.9 326.7 L926.2 328.4 L933.0 330.4 L939.3 332.6 L945.1 335.0 L950.5 337.6 L955.3 340.4 L959.5 343.4 L963.2 346.6 L966.4 350.0 L968.9 353.5 L970.9 357.2 L972.3 361.0 L973.0 364.9 L973.1 369.0 L972.5 373.3" stroke="#2f54b8" stroke-width="1.25" fill="none"/>
<path d="M945.6 494.3 L944.1 500.0 L941.9 505.4 L939.2 510.7 L935.9 515.6 L932.1 520.4 L927.7 524.9 L922.8 529.1 L917.4 533.0 L911.6 536.6 L905.3 539.9 L898.5 542.9 L891.3 545.7 L883.7 548.0 L875.8 550.1 L867.5 551.8 L858.8 553.1 L849.8 554.1 L840.5 554.7 L830.9 554.9 L821.0 554.8" stroke="#2f54b8" stroke-width="1.25" fill="none"/>
<path d="M54.5 354.3 L56.1 349.1 L58.4 344.1 L61.5 339.3 L65.3 334.6 L69.8 330.1 L74.9 325.8 L80.6 321.8 L86.9 318.0 L93.7 314.4 L101.0 311.1 L108.7 308.0 L116.9 305.3 L125.5 302.9 L134.4 300.8 L143.6 299.0 L153.1 297.6 L162.8 296.6 L172.7 295.9 L182.8 295.7 L193.0 295.8" stroke="#18c018" stroke-width="1.25" fill="none"/>
<path d="M135.5 530.0 L126.6 529.5 L117.9 528.5 L109.3 527.1 L100.9 525.4 L92.9 523.2 L85.1 520.8 L77.6 518.0 L70.6 514.9 L63.9 511.6 L57.7 508.0 L52.0 504.2 L46.9 500.3 L42.3 496.1 L38.4 491.9 L35.1 487.5 L32.5 483.0 L30.6 478.4 L29.5 473.9 L29.2 469.3 L29.8 464.7" stroke="#18c018" stroke-width="1.25" fill="none"/>
<path d="M876.0 321.6 L885.4 322.1 L894.4 322.9 L903.0 323.9 L911.1 325.2 L918.9 326.7 L926.2 328.4 L933.0 330.4 L939.3 332.6 L945.1 335.0 L950.5 337.6 L955.3 340.4 L959.5 343.4 L963.2 346.6 L966.4 350.0 L968.9 353.5 L970.9 357.2 L972.3 361.0 L973.0 364.9 L973.1 369.0 L972.5 373.3" stroke="#18c018" stroke-width="1.25" fill="none" stroke-dasharray="1.5 5" stroke-opacity="0.8"/>
<path d="M945.6 494.3 L944.1 500.0 L941.9 505.4 L939.2 510.7 L935.9 515.6 L932.1 520.4 L927.7 524.9 L922.8 529.1 L917.4 533.0 L911.6 536.6 L905.3 539.9 L898.5 542.9 L891.3 545.7 L883.7 548.0 L875.8 550.1 L867.5 551.8 L858.8 553.1 L849.8 554.1 L840.5 554.7 L830.9 554.9 L821.0 554.8" stroke="#18c018" stroke-width="1.25" fill="none" stroke-dasharray="1.5 5" stroke-opacity="0.8"/>
<path d="M193.0 299.1 L484.8 310.1" stroke="#2f54b8" stroke-width="1.25" fill="none"/>
<path d="M579.0 313.7 L876.0 324.9" stroke="#2f54b8" stroke-width="1.25" fill="none"/>
<path d="M972.5 376.5 L945.6 497.5" stroke="#2f54b8" stroke-width="1.25" fill="none"/>
<path d="M821.0 558.0 L811.0 557.6" stroke="#2f54b8" stroke-width="1.25" fill="none"/>
<path d="M721.0 554.4 L135.5 533.3" stroke="#2f54b8" stroke-width="1.25" fill="none"/>
<path d="M29.8 467.9 L33.5 451.5" stroke="#2f54b8" stroke-width="1.25" fill="none"/>
<path d="M48.0 386.5 L54.5 357.5" stroke="#2f54b8" stroke-width="1.25" fill="none"/>
<path d="M876.0 324.9 L885.4 325.4 L894.4 326.1 L903.0 327.2 L911.1 328.4 L918.9 330.0 L926.2 331.7 L933.0 333.7 L939.3 335.9 L945.1 338.3 L950.5 340.9 L955.3 343.7 L959.5 346.7 L963.2 349.9 L966.4 353.2 L968.9 356.8 L970.9 360.4 L972.3 364.2 L973.0 368.2 L973.1 372.3 L972.5 376.5" stroke="#2f54b8" stroke-width="1.25" fill="none"/>
<path d="M945.6 497.5 L944.1 503.2 L941.9 508.7 L939.2 513.9 L935.9 518.9 L932.1 523.6 L927.7 528.1 L922.8 532.3 L917.4 536.2 L911.6 539.9 L905.3 543.2 L898.5 546.2 L891.3 548.9 L883.7 551.3 L875.8 553.3 L867.5 555.0 L858.8 556.4 L849.8 557.4 L840.5 558.0 L830.9 558.2 L821.0 558.0" stroke="#2f54b8" stroke-width="1.25" fill="none"/>
<path d="M54.5 357.5 L56.1 352.4 L58.4 347.4 L61.5 342.5 L65.3 337.9 L69.8 333.4 L74.9 329.1 L80.6 325.0 L86.9 321.2 L93.7 317.6 L101.0 314.3 L108.7 311.3 L116.9 308.6 L125.5 306.1 L134.4 304.0 L143.6 302.3 L153.1 300.9 L162.8 299.8 L172.7 299.2 L182.8 298.9 L193.0 299.1" stroke="#18c018" stroke-width="1.25" fill="none"/>
<path d="M135.5 533.3 L126.6 532.8 L117.9 531.8 L109.3 530.4 L100.9 528.6 L92.9 526.5 L85.1 524.0 L77.6 521.2 L70.6 518.2 L63.9 514.8 L57.7 511.3 L52.0 507.5 L46.9 503.5 L42.3 499.4 L38.4 495.1 L35.1 490.7 L32.5 486.3 L30.6 481.7 L29.5 477.1 L29.2 472.5 L29.8 467.9" stroke="#18c018" stroke-width="1.25" fill="none"/>
<path d="M876.0 324.9 L885.4 325.4 L894.4 326.1 L903.0 327.2 L911.1 328.4 L918.9 330.0 L926.2 331.7 L933.0 333.7 L939.3 335.9 L945.1 338.3 L950.5 340.9 L955.3 343.7 L959.5 346.7 L963.2 349.9 L966.4 353.2 L968.9 356.8 L970.9 360.4 L972.3 364.2 L973.0 368.2 L973.1 372.3 L972.5 376.5" stroke="#18c018" stroke-width="1.25" fill="none" stroke-dasharray="1.5 5" stroke-opacity="0.8"/>
<path d="M945.6 497.5 L944.1 503.2 L941.9 508.7 L939.2 513.9 L935.9 518.9 L932.1 523.6 L927.7 528.1 L922.8 532.3 L917.4 536.2 L911.6 539.9 L905.3 543.2 L898.5 546.2 L891.3 548.9 L883.7 551.3 L875.8 553.3 L867.5 555.0 L858.8 556.4 L849.8 557.4 L840.5 558.0 L830.9 558.2 L821.0 558.0" stroke="#18c018" stroke-width="1.25" fill="none" stroke-dasharray="1.5 5" stroke-opacity="0.8"/>
<path d="M193.0 302.4 L484.8 313.4" stroke="#2f54b8" stroke-width="1.25" fill="none"/>
<path d="M579.0 316.9 L876.0 328.1" stroke="#2f54b8" stroke-width="1.25" fill="none"/>
<path d="M972.5 379.8 L945.6 500.8" stroke="#2f54b8" stroke-width="1.25" fill="none"/>
<path d="M821.0 561.3 L811.0 560.9" stroke="#2f54b8" stroke-width="1.25" fill="none"/>
<path d="M721.0 557.7 L135.5 536.6" stroke="#2f54b8" stroke-width="1.25" fill="none"/>
<path d="M29.8 471.2 L33.5 454.8" stroke="#2f54b8" stroke-width="1.25" fill="none"/>
<path d="M48.0 389.8 L54.5 360.8" stroke="#2f54b8" stroke-width="1.25" fill="none"/>
<path d="M876.0 328.1 L885.4 328.6 L894.4 329.4 L903.0 330.4 L911.1 331.7 L918.9 333.2 L926.2 335.0 L933.0 337.0 L939.3 339.2 L945.1 341.6 L950.5 344.2 L955.3 347.0 L959.5 350.0 L963.2 353.2 L966.4 356.5 L968.9 360.0 L970.9 363.7 L972.3 367.5 L973.0 371.5 L973.1 375.6 L972.5 379.8" stroke="#2f54b8" stroke-width="1.25" fill="none"/>
<path d="M945.6 500.8 L944.1 506.5 L941.9 512.0 L939.2 517.2 L935.9 522.2 L932.1 526.9 L927.7 531.4 L922.8 535.6 L917.4 539.5 L911.6 543.1 L905.3 546.5 L898.5 549.5 L891.3 552.2 L883.7 554.6 L875.8 556.6 L867.5 558.3 L858.8 559.6 L849.8 560.6 L840.5 561.2 L830.9 561.5 L821.0 561.3" stroke="#2f54b8" stroke-width="1.25" fill="none"/>
<path d="M54.5 360.8 L56.1 355.7 L58.4 350.6 L61.5 345.8 L65.3 341.1 L69.8 336.7 L74.9 332.4 L80.6 328.3 L86.9 324.5 L93.7 320.9 L101.0 317.6 L108.7 314.6 L116.9 311.8 L125.5 309.4 L134.4 307.3 L143.6 305.5 L153.1 304.1 L162.8 303.1 L172.7 302.4 L182.8 302.2 L193.0 302.4" stroke="#18c018" stroke-width="1.25" fill="none"/>
<path d="M135.5 536.6 L126.6 536.0 L117.9 535.0 L109.3 533.7 L100.9 531.9 L92.9 529.8 L85.1 527.3 L77.6 524.5 L70.6 521.4 L63.9 518.1 L57.7 514.5 L52.0 510.8 L46.9 506.8 L42.3 502.7 L38.4 498.4 L35.1 494.0 L32.5 489.5 L30.6 485.0 L29.5 480.4 L29.2 475.8 L29.8 471.2" stroke="#18c018" stroke-width="1.25" fill="none"/>
<path d="M876.0 328.1 L885.4 328.6 L894.4 329.4 L903.0 330.4 L911.1 331.7 L918.9 333.2 L926.2 335.0 L933.0 337.0 L939.3 339.2 L945.1 341.6 L950.5 344.2 L955.3 347.0 L959.5 350.0 L963.2 353.2 L966.4 356.5 L968.9 360.0 L970.9 363.7 L972.3 367.5 L973.0 371.5 L973.1 375.6 L972.5 379.8" stroke="#18c018" stroke-width="1.25" fill="none" stroke-dasharray="1.5 5" stroke-opacity="0.8"/>
<path d="M945.6 500.8 L944.1 506.5 L941.9 512.0 L939.2 517.2 L935.9 522.2 L932.1 526.9 L927.7 531.4 L922.8 535.6 L917.4 539.5 L911.6 543.1 L905.3 546.5 L898.5 549.5 L891.3 552.2 L883.7 554.6 L875.8 556.6 L867.5 558.3 L858.8 559.6 L849.8 560.6 L840.5 561.2 L830.9 561.5 L821.0 561.3" stroke="#18c018" stroke-width="1.25" fill="none" stroke-dasharray="1.5 5" stroke-opacity="0.8"/>
<path d="M193.0 305.6 L484.8 316.6" stroke="#2f54b8" stroke-width="1.25" fill="none"/>
<path d="M579.0 320.2 L876.0 331.4" stroke="#2f54b8" stroke-width="1.25" fill="none"/>
<path d="M972.5 383.1 L945.6 504.1" stroke="#2f54b8" stroke-width="1.25" fill="none"/>
<path d="M821.0 564.6 L811.0 564.2" stroke="#2f54b8" stroke-width="1.25" fill="none"/>
<path d="M721.0 560.9 L135.5 539.8" stroke="#2f54b8" stroke-width="1.25" fill="none"/>
<path d="M29.8 474.5 L33.5 458.1" stroke="#2f54b8" stroke-width="1.25" fill="none"/>
<path d="M48.0 393.1 L54.5 364.1" stroke="#2f54b8" stroke-width="1.25" fill="none"/>
<path d="M876.0 331.4 L885.4 331.9 L894.4 332.7 L903.0 333.7 L911.1 335.0 L918.9 336.5 L926.2 338.2 L933.0 340.2 L939.3 342.4 L945.1 344.8 L950.5 347.4 L955.3 350.2 L959.5 353.2 L963.2 356.4 L966.4 359.8 L968.9 363.3 L970.9 367.0 L972.3 370.8 L973.0 374.7 L973.1 378.8 L972.5 383.1" stroke="#2f54b8" stroke-width="1.25" fill="none"/>
<path d="M945.6 504.1 L944.1 509.8 L941.9 515.2 L939.2 520.5 L935.9 525.4 L932.1 530.2 L927.7 534.6 L922.8 538.8 L917.4 542.8 L911.6 546.4 L905.3 549.7 L898.5 552.7 L891.3 555.4 L883.7 557.8 L875.8 559.9 L867.5 561.6 L858.8 562.9 L849.8 563.9 L840.5 564.5 L830.9 564.7 L821.0 564.6" stroke="#2f54b8" stroke-width="1.25" fill="none"/>
<path d="M54.5 364.1 L56.1 358.9 L58.4 353.9 L61.5 349.1 L65.3 344.4 L69.8 339.9 L74.9 335.6 L80.6 331.6 L86.9 327.7 L93.7 324.2 L101.0 320.9 L108.7 317.8 L116.9 315.1 L125.5 312.6 L134.4 310.5 L143.6 308.8 L153.1 307.4 L162.8 306.3 L172.7 305.7 L182.8 305.5 L193.0 305.6" stroke="#18c018" stroke-width="1.25" fill="none"/>
<path d="M135.5 539.8 L126.6 539.3 L117.9 538.3 L109.3 536.9 L100.9 535.2 L92.9 533.0 L85.1 530.5 L77.6 527.8 L70.6 524.7 L63.9 521.4 L57.7 517.8 L52.0 514.0 L46.9 510.1 L42.3 505.9 L38.4 501.6 L35.1 497.3 L32.5 492.8 L30.6 488.2 L29.5 483.7 L29.2 479.1 L29.8 474.5" stroke="#18c018" stroke-width="1.25" fill="none"/>
<path d="M876.0 331.4 L885.4 331.9 L894.4 332.7 L903.0 333.7 L911.1 335.0 L918.9 336.5 L926.2 338.2 L933.0 340.2 L939.3 342.4 L945.1 344.8 L950.5 347.4 L955.3 350.2 L959.5 353.2 L963.2 356.4 L966.4 359.8 L968.9 363.3 L970.9 367.0 L972.3 370.8 L973.0 374.7 L973.1 378.8 L972.5 383.1" stroke="#18c018" stroke-width="1.25" fill="none" stroke-dasharray="1.5 5" stroke-opacity="0.8"/>
<path d="M945.6 504.1 L944.1 509.8 L941.9 515.2 L939.2 520.5 L935.9 525.4 L932.1 530.2 L927.7 534.6 L922.8 538.8 L917.4 542.8 L911.6 546.4 L905.3 549.7 L898.5 552.7 L891.3 555.4 L883.7 557.8 L875.8 559.9 L867.5 561.6 L858.8 562.9 L849.8 563.9 L840.5 564.5 L830.9 564.7 L821.0 564.6" stroke="#18c018" stroke-width="1.25" fill="none" stroke-dasharray="1.5 5" stroke-opacity="0.8"/>
<path d="M193.0 308.9 L484.8 319.9" stroke="#2f54b8" stroke-width="1.25" fill="none"/>
<path d="M579.0 323.5 L876.0 334.7" stroke="#2f54b8" stroke-width="1.25" fill="none"/>
<path d="M972.5 386.3 L945.6 507.3" stroke="#2f54b8" stroke-width="1.25" fill="none"/>
<path d="M821.0 567.8 L811.0 567.4" stroke="#2f54b8" stroke-width="1.25" fill="none"/>
<path d="M721.0 564.2 L135.5 543.1" stroke="#2f54b8" stroke-width="1.25" fill="none"/>
<path d="M29.8 477.7 L33.5 461.3" stroke="#2f54b8" stroke-width="1.25" fill="none"/>
<path d="M48.0 396.3 L54.5 367.3" stroke="#2f54b8" stroke-width="1.25" fill="none"/>
<path d="M876.0 334.7 L885.4 335.2 L894.4 335.9 L903.0 337.0 L911.1 338.2 L918.9 339.8 L926.2 341.5 L933.0 343.5 L939.3 345.7 L945.1 348.1 L950.5 350.7 L955.3 353.5 L959.5 356.5 L963.2 359.7 L966.4 363.0 L968.9 366.5 L970.9 370.2 L972.3 374.0 L973.0 378.0 L973.1 382.1 L972.5 386.3" stroke="#2f54b8" stroke-width="1.25" fill="none"/>
<path d="M945.6 507.3 L944.1 513.0 L941.9 518.5 L939.2 523.7 L935.9 528.7 L932.1 533.4 L927.7 537.9 L922.8 542.1 L917.4 546.0 L911.6 549.7 L905.3 553.0 L898.5 556.0 L891.3 558.7 L883.7 561.1 L875.8 563.1 L867.5 564.8 L858.8 566.2 L849.8 567.1 L840.5 567.8 L830.9 568.0 L821.0 567.8" stroke="#2f54b8" stroke-width="1.25" fill="none"/>
<path d="M54.5 367.3 L56.1 362.2 L58.4 357.2 L61.5 352.3 L65.3 347.7 L69.8 343.2 L74.9 338.9 L80.6 334.8 L86.9 331.0 L93.7 327.4 L101.0 324.1 L108.7 321.1 L116.9 318.3 L125.5 315.9 L134.4 313.8 L143.6 312.0 L153.1 310.6 L162.8 309.6 L172.7 309.0 L182.8 308.7 L193.0 308.9" stroke="#18c018" stroke-width="1.25" fill="none"/>
<path d="M135.5 543.1 L126.6 542.6 L117.9 541.6 L109.3 540.2 L100.9 538.4 L92.9 536.3 L85.1 533.8 L77.6 531.0 L70.6 528.0 L63.9 524.6 L57.7 521.1 L52.0 517.3 L46.9 513.3 L42.3 509.2 L38.4 504.9 L35.1 500.5 L32.5 496.0 L30.6 491.5 L29.5 486.9 L29.2 482.3 L29.8 477.7" stroke="#18c018" stroke-width="1.25" fill="none"/>
<path d="M876.0 334.7 L885.4 335.2 L894.4 335.9 L903.0 337.0 L911.1 338.2 L918.9 339.8 L926.2 341.5 L933.0 343.5 L939.3 345.7 L945.1 348.1 L950.5 350.7 L955.3 353.5 L959.5 356.5 L963.2 359.7 L966.4 363.0 L968.9 366.5 L970.9 370.2 L972.3 374.0 L973.0 378.0 L973.1 382.1 L972.5 386.3" stroke="#18c018" stroke-width="1.25" fill="none" stroke-dasharray="1.5 5" stroke-opacity="0.8"/>
<path d="M945.6 507.3 L944.1 513.0 L941.9 518.5 L939.2 523.7 L935.9 528.7 L932.1 533.4 L927.7 537.9 L922.8 542.1 L917.4 546.0 L911.6 549.7 L905.3 553.0 L898.5 556.0 L891.3 558.7 L883.7 561.1 L875.8 563.1 L867.5 564.8 L858.8 566.2 L849.8 567.1 L840.5 567.8 L830.9 568.0 L821.0 567.8" stroke="#18c018" stroke-width="1.25" fill="none" stroke-dasharray="1.5 5" stroke-opacity="0.8"/>
<path d="M193.0 312.2 L484.8 323.2" stroke="#2f54b8" stroke-width="1.25" fill="none"/>
<path d="M579.0 326.7 L876.0 337.9" stroke="#2f54b8" stroke-width="1.25" fill="none"/>
<path d="M972.5 389.6 L945.6 510.6" stroke="#2f54b8" stroke-width="1.25" fill="none"/>
<path d="M821.0 571.1 L811.0 570.7" stroke="#2f54b8" stroke-width="1.25" fill="none"/>
<path d="M721.0 567.4 L135.5 546.4" stroke="#2f54b8" stroke-width="1.25" fill="none"/>
<path d="M29.8 481.0 L33.5 464.6" stroke="#2f54b8" stroke-width="1.25" fill="none"/>
<path d="M48.0 399.6 L54.5 370.6" stroke="#2f54b8" stroke-width="1.25" fill="none"/>
<path d="M876.0 337.9 L885.4 338.4 L894.4 339.2 L903.0 340.2 L911.1 341.5 L918.9 343.0 L926.2 344.8 L933.0 346.7 L939.3 348.9 L945.1 351.4 L950.5 354.0 L955.3 356.8 L959.5 359.8 L963.2 362.9 L966.4 366.3 L968.9 369.8 L970.9 373.5 L972.3 377.3 L973.0 381.3 L973.1 385.4 L972.5 389.6" stroke="#2f54b8" stroke-width="1.25" fill="none"/>
<path d="M945.6 510.6 L944.1 516.3 L941.9 521.7 L939.2 527.0 L935.9 532.0 L932.1 536.7 L927.7 541.2 L922.8 545.4 L917.4 549.3 L911.6 552.9 L905.3 556.2 L898.5 559.3 L891.3 562.0 L883.7 564.3 L875.8 566.4 L867.5 568.1 L858.8 569.4 L849.8 570.4 L840.5 571.0 L830.9 571.2 L821.0 571.1" stroke="#2f54b8" stroke-width="1.25" fill="none"/>
<path d="M54.5 370.6 L56.1 365.4 L58.4 360.4 L61.5 355.6 L65.3 350.9 L69.8 346.4 L74.9 342.2 L80.6 338.1 L86.9 334.3 L93.7 330.7 L101.0 327.4 L108.7 324.3 L116.9 321.6 L125.5 319.2 L134.4 317.1 L143.6 315.3 L153.1 313.9 L162.8 312.9 L172.7 312.2 L182.8 312.0 L193.0 312.2" stroke="#18c018" stroke-width="1.25" fill="none"/>
<path d="M135.5 546.4 L126.6 545.8 L117.9 544.8 L109.3 543.5 L100.9 541.7 L92.9 539.5 L85.1 537.1 L77.6 534.3 L70.6 531.2 L63.9 527.9 L57.7 524.3 L52.0 520.5 L46.9 516.6 L42.3 512.4 L38.4 508.2 L35.1 503.8 L32.5 499.3 L30.6 494.8 L29.5 490.2 L29.2 485.6 L29.8 481.0" stroke="#18c018" stroke-width="1.25" fill="none"/>
<path d="M876.0 337.9 L885.4 338.4 L894.4 339.2 L903.0 340.2 L911.1 341.5 L918.9 343.0 L926.2 344.8 L933.0 346.7 L939.3 348.9 L945.1 351.4 L950.5 354.0 L955.3 356.8 L959.5 359.8 L963.2 362.9 L966.4 366.3 L968.9 369.8 L970.9 373.5 L972.3 377.3 L973.0 381.3 L973.1 385.4 L972.5 389.6" stroke="#18c018" stroke-width="1.25" fill="none" stroke-dasharray="1.5 5" stroke-opacity="0.8"/>
<path d="M945.6 510.6 L944.1 516.3 L941.9 521.7 L939.2 527.0 L935.9 532.0 L932.1 536.7 L927.7 541.2 L922.8 545.4 L917.4 549.3 L911.6 552.9 L905.3 556.2 L898.5 559.3 L891.3 562.0 L883.7 564.3 L875.8 566.4 L867.5 568.1 L858.8 569.4 L849.8 570.4 L840.5 571.0 L830.9 571.2 L821.0 571.1" stroke="#18c018" stroke-width="1.25" fill="none" stroke-dasharray="1.5 5" stroke-opacity="0.8"/>
<path d="M193.0 315.4 L484.8 326.4" stroke="#2f54b8" stroke-width="1.25" fill="none"/>
<path d="M579.0 330.0 L876.0 341.2" stroke="#2f54b8" stroke-width="1.25" fill="none"/>
<path d="M972.5 392.9 L945.6 513.9" stroke="#2f54b8" stroke-width="1.25" fill="none"/>
<path d="M821.0 574.4 L811.0 573.9" stroke="#2f54b8" stroke-width="1.25" fill="none"/>
<path d="M721.0 570.7 L135.5 549.6" stroke="#2f54b8" stroke-width="1.25" fill="none"/>
<path d="M29.8 484.2 L33.5 467.9" stroke="#2f54b8" stroke-width="1.25" fill="none"/>
<path d="M48.0 402.9 L54.5 373.9" stroke="#2f54b8" stroke-width="1.25" fill="none"/>
<path d="M876.0 341.2 L885.4 341.7 L894.4 342.5 L903.0 343.5 L911.1 344.8 L918.9 346.3 L926.2 348.0 L933.0 350.0 L939.3 352.2 L945.1 354.6 L950.5 357.2 L955.3 360.0 L959.5 363.0 L963.2 366.2 L966.4 369.6 L968.9 373.1 L970.9 376.7 L972.3 380.6 L973.0 384.5 L973.1 388.6 L972.5 392.9" stroke="#2f54b8" stroke-width="1.25" fill="none"/>
<path d="M945.6 513.9 L944.1 519.5 L941.9 525.0 L939.2 530.2 L935.9 535.2 L932.1 540.0 L927.7 544.4 L922.8 548.6 L917.4 552.6 L911.6 556.2 L905.3 559.5 L898.5 562.5 L891.3 565.2 L883.7 567.6 L875.8 569.7 L867.5 571.4 L858.8 572.7 L849.8 573.7 L840.5 574.3 L830.9 574.5 L821.0 574.4" stroke="#2f54b8" stroke-width="1.25" fill="none"/>
<path d="M54.5 373.9 L56.1 368.7 L58.4 363.7 L61.5 358.9 L65.3 354.2 L69.8 349.7 L74.9 345.4 L80.6 341.4 L86.9 337.5 L93.7 334.0 L101.0 330.6 L108.7 327.6 L116.9 324.9 L125.5 322.4 L134.4 320.3 L143.6 318.6 L153.1 317.2 L162.8 316.1 L172.7 315.5 L182.8 315.2 L193.0 315.4" stroke="#18c018" stroke-width="1.25" fill="none"/>
<path d="M135.5 549.6 L126.6 549.1 L117.9 548.1 L109.3 546.7 L100.9 544.9 L92.9 542.8 L85.1 540.3 L77.6 537.6 L70.6 534.5 L63.9 531.2 L57.7 527.6 L52.0 523.8 L46.9 519.8 L42.3 515.7 L38.4 511.4 L35.1 507.1 L32.5 502.6 L30.6 498.0 L29.5 493.4 L29.2 488.8 L29.8 484.2" stroke="#18c018" stroke-width="1.25" fill="none"/>
<path d="M876.0 341.2 L885.4 341.7 L894.4 342.5 L903.0 343.5 L911.1 344.8 L918.9 346.3 L926.2 348.0 L933.0 350.0 L939.3 352.2 L945.1 354.6 L950.5 357.2 L955.3 360.0 L959.5 363.0 L963.2 366.2 L966.4 369.6 L968.9 373.1 L970.9 376.7 L972.3 380.6 L973.0 384.5 L973.1 388.6 L972.5 392.9" stroke="#18c018" stroke-width="1.25" fill="none" stroke-dasharray="1.5 5" stroke-opacity="0.8"/>
<path d="M945.6 513.9 L944.1 519.5 L941.9 525.0 L939.2 530.2 L935.9 535.2 L932.1 540.0 L927.7 544.4 L922.8 548.6 L917.4 552.6 L911.6 556.2 L905.3 559.5 L898.5 562.5 L891.3 565.2 L883.7 567.6 L875.8 569.7 L867.5 571.4 L858.8 572.7 L849.8 573.7 L840.5 574.3 L830.9 574.5 L821.0 574.4" stroke="#18c018" stroke-width="1.25" fill="none" stroke-dasharray="1.5 5" stroke-opacity="0.8"/>
<path d="M193.0 318.7 L484.8 329.7" stroke="#2f54b8" stroke-width="1.25" fill="none"/>
<path d="M579.0 333.3 L876.0 344.5" stroke="#2f54b8" stroke-width="1.25" fill="none"/>
<path d="M972.5 396.1 L945.6 517.1" stroke="#2f54b8" stroke-width="1.25" fill="none"/>
<path d="M821.0 577.6 L811.0 577.2" stroke="#2f54b8" stroke-width="1.25" fill="none"/>
<path d="M721.0 574.0 L135.5 552.9" stroke="#2f54b8" stroke-width="1.25" fill="none"/>
<path d="M29.8 487.5 L33.5 471.1" stroke="#2f54b8" stroke-width="1.25" fill="none"/>
<path d="M48.0 406.1 L54.5 377.1" stroke="#2f54b8" stroke-width="1.25" fill="none"/>
<path d="M876.0 344.5 L885.4 345.0 L894.4 345.7 L903.0 346.8 L911.1 348.0 L918.9 349.5 L926.2 351.3 L933.0 353.3 L939.3 355.5 L945.1 357.9 L950.5 360.5 L955.3 363.3 L959.5 366.3 L963.2 369.5 L966.4 372.8 L968.9 376.3 L970.9 380.0 L972.3 383.8 L973.0 387.8 L973.1 391.9 L972.5 396.1" stroke="#2f54b8" stroke-width="1.25" fill="none"/>
<path d="M945.6 517.1 L944.1 522.8 L941.9 528.3 L939.2 533.5 L935.9 538.5 L932.1 543.2 L927.7 547.7 L922.8 551.9 L917.4 555.8 L911.6 559.4 L905.3 562.8 L898.5 565.8 L891.3 568.5 L883.7 570.9 L875.8 572.9 L867.5 574.6 L858.8 576.0 L849.8 576.9 L840.5 577.5 L830.9 577.8 L821.0 577.6" stroke="#2f54b8" stroke-width="1.25" fill="none"/>
<path d="M54.5 377.1 L56.1 372.0 L58.4 367.0 L61.5 362.1 L65.3 357.5 L69.8 353.0 L74.9 348.7 L80.6 344.6 L86.9 340.8 L93.7 337.2 L101.0 333.9 L108.7 330.9 L116.9 328.1 L125.5 325.7 L134.4 323.6 L143.6 321.8 L153.1 320.4 L162.8 319.4 L172.7 318.8 L182.8 318.5 L193.0 318.7" stroke="#18c018" stroke-width="1.25" fill="none"/>
<path d="M135.5 552.9 L126.6 552.4 L117.9 551.4 L109.3 550.0 L100.9 548.2 L92.9 546.1 L85.1 543.6 L77.6 540.8 L70.6 537.8 L63.9 534.4 L57.7 530.9 L52.0 527.1 L46.9 523.1 L42.3 519.0 L38.4 514.7 L35.1 510.3 L32.5 505.8 L30.6 501.3 L29.5 496.7 L29.2 492.1 L29.8 487.5" stroke="#18c018" stroke-width="1.25" fill="none"/>
<path d="M876.0 344.5 L885.4 345.0 L894.4 345.7 L903.0 346.8 L911.1 348.0 L918.9 349.5 L926.2 351.3 L933.0 353.3 L939.3 355.5 L945.1 357.9 L950.5 360.5 L955.3 363.3 L959.5 366.3 L963.2 369.5 L966.4 372.8 L968.9 376.3 L970.9 380.0 L972.3 383.8 L973.0 387.8 L973.1 391.9 L972.5 396.1" stroke="#18c018" stroke-width="1.25" fill="none" stroke-dasharray="1.5 5" stroke-opacity="0.8"/>
<path d="M945.6 517.1 L944.1 522.8 L941.9 528.3 L939.2 533.5 L935.9 538.5 L932.1 543.2 L927.7 547.7 L922.8 551.9 L917.4 555.8 L911.6 559.4 L905.3 562.8 L898.5 565.8 L891.3 568.5 L883.7 570.9 L875.8 572.9 L867.5 574.6 L858.8 576.0 L849.8 576.9 L840.5 577.5 L830.9 577.8 L821.0 577.6" stroke="#18c018" stroke-width="1.25" fill="none" stroke-dasharray="1.5 5" stroke-opacity="0.8"/>
<path d="M193.0 322.0 L484.8 333.0" stroke="#2f54b8" stroke-width="1.25" fill="none"/>
<path d="M579.0 336.5 L876.0 347.7" stroke="#2f54b8" stroke-width="1.25" fill="none"/>
<path d="M972.5 399.4 L945.6 520.4" stroke="#2f54b8" stroke-width="1.25" fill="none"/>
<path d="M821.0 580.9 L811.0 580.5" stroke="#2f54b8" stroke-width="1.25" fill="none"/>
<path d="M721.0 577.2 L135.5 556.2" stroke="#2f54b8" stroke-width="1.25" fill="none"/>
<path d="M29.8 490.8 L33.5 474.4" stroke="#2f54b8" stroke-width="1.25" fill="none"/>
<path d="M48.0 409.4 L54.5 380.4" stroke="#2f54b8" stroke-width="1.25" fill="none"/>
<path d="M876.0 347.7 L885.4 348.2 L894.4 349.0 L903.0 350.0 L911.1 351.3 L918.9 352.8 L926.2 354.6 L933.0 356.5 L939.3 358.7 L945.1 361.1 L950.5 363.8 L955.3 366.6 L959.5 369.6 L963.2 372.7 L966.4 376.1 L968.9 379.6 L970.9 383.3 L972.3 387.1 L973.0 391.1 L973.1 395.2 L972.5 399.4" stroke="#2f54b8" stroke-width="1.25" fill="none"/>
<path d="M945.6 520.4 L944.1 526.1 L941.9 531.5 L939.2 536.8 L935.9 541.8 L932.1 546.5 L927.7 551.0 L922.8 555.2 L917.4 559.1 L911.6 562.7 L905.3 566.0 L898.5 569.1 L891.3 571.8 L883.7 574.1 L875.8 576.2 L867.5 577.9 L858.8 579.2 L849.8 580.2 L840.5 580.8 L830.9 581.0 L821.0 580.9" stroke="#2f54b8" stroke-width="1.25" fill="none"/>
<path d="M54.5 380.4 L56.1 375.2 L58.4 370.2 L61.5 365.4 L65.3 360.7 L69.8 356.2 L74.9 352.0 L80.6 347.9 L86.9 344.1 L93.7 340.5 L101.0 337.2 L108.7 334.1 L116.9 331.4 L125.5 329.0 L134.4 326.9 L143.6 325.1 L153.1 323.7 L162.8 322.7 L172.7 322.0 L182.8 321.8 L193.0 322.0" stroke="#18c018" stroke-width="1.25" fill="none"/>
<path d="M135.5 556.2 L126.6 555.6 L117.9 554.6 L109.3 553.2 L100.9 551.5 L92.9 549.3 L85.1 546.9 L77.6 544.1 L70.6 541.0 L63.9 537.7 L57.7 534.1 L52.0 530.3 L46.9 526.4 L42.3 522.2 L38.4 518.0 L35.1 513.6 L32.5 509.1 L30.6 504.6 L29.5 500.0 L29.2 495.4 L29.8 490.8" stroke="#18c018" stroke-width="1.25" fill="none"/>
<path d="M876.0 347.7 L885.4 348.2 L894.4 349.0 L903.0 350.0 L911.1 351.3 L918.9 352.8 L926.2 354.6 L933.0 356.5 L939.3 358.7 L945.1 361.1 L950.5 363.8 L955.3 366.6 L959.5 369.6 L963.2 372.7 L966.4 376.1 L968.9 379.6 L970.9 383.3 L972.3 387.1 L973.0 391.1 L973.1 395.2 L972.5 399.4" stroke="#18c018" stroke-width="1.25" fill="none" stroke-dasharray="1.5 5" stroke-opacity="0.8"/>
<path d="M945.6 520.4 L944.1 526.1 L941.9 531.5 L939.2 536.8 L935.9 541.8 L932.1 546.5 L927.7 551.0 L922.8 555.2 L917.4 559.1 L911.6 562.7 L905.3 566.0 L898.5 569.1 L891.3 571.8 L883.7 574.1 L875.8 576.2 L867.5 577.9 L858.8 579.2 L849.8 580.2 L840.5 580.8 L830.9 581.0 L821.0 580.9" stroke="#18c018" stroke-width="1.25" fill="none" stroke-dasharray="1.5 5" stroke-opacity="0.8"/>
<path d="M193.0 325.2 L484.8 336.2" stroke="#2f54b8" stroke-width="1.25" fill="none"/>
<path d="M579.0 339.8 L876.0 351.0" stroke="#2f54b8" stroke-width="1.25" fill="none"/>
<path d="M972.5 402.6 L945.6 523.6" stroke="#2f54b8" stroke-width="1.25" fill="none"/>
<path d="M821.0 584.1 L811.0 583.7" stroke="#2f54b8" stroke-width="1.25" fill="none"/>
<path d="M721.0 580.5 L135.5 559.4" stroke="#2f54b8" stroke-width="1.25" fill="none"/>
<path d="M29.8 494.0 L33.5 477.6" stroke="#2f54b8" stroke-width="1.25" fill="none"/>
<path d="M48.0 412.6 L54.5 383.6" stroke="#2f54b8" stroke-width="1.25" fill="none"/>
<path d="M876.0 351.0 L885.4 351.5 L894.4 352.3 L903.0 353.3 L911.1 354.6 L918.9 356.1 L926.2 357.8 L933.0 359.8 L939.3 362.0 L945.1 364.4 L950.5 367.0 L955.3 369.8 L959.5 372.8 L963.2 376.0 L966.4 379.4 L968.9 382.9 L970.9 386.5 L972.3 390.4 L973.0 394.3 L973.1 398.4 L972.5 402.6" stroke="#2f54b8" stroke-width="1.25" fill="none"/>
<path d="M945.6 523.6 L944.1 529.3 L941.9 534.8 L939.2 540.0 L935.9 545.0 L932.1 549.8 L927.7 554.2 L922.8 558.4 L917.4 562.3 L911.6 566.0 L905.3 569.3 L898.5 572.3 L891.3 575.0 L883.7 577.4 L875.8 579.4 L867.5 581.1 L858.8 582.5 L849.8 583.5 L840.5 584.1 L830.9 584.3 L821.0 584.1" stroke="#2f54b8" stroke-width="1.25" fill="none"/>
<path d="M54.5 383.6 L56.1 378.5 L58.4 373.5 L61.5 368.7 L65.3 364.0 L69.8 359.5 L74.9 355.2 L80.6 351.2 L86.9 347.3 L93.7 343.8 L101.0 340.4 L108.7 337.4 L116.9 334.7 L125.5 332.2 L134.4 330.1 L143.6 328.4 L153.1 327.0 L162.8 325.9 L172.7 325.3 L182.8 325.0 L193.0 325.2" stroke="#18c018" stroke-width="1.25" fill="none"/>
<path d="M135.5 559.4 L126.6 558.9 L117.9 557.9 L109.3 556.5 L100.9 554.7 L92.9 552.6 L85.1 550.1 L77.6 547.4 L70.6 544.3 L63.9 541.0 L57.7 537.4 L52.0 533.6 L46.9 529.6 L42.3 525.5 L38.4 521.2 L35.1 516.8 L32.5 512.4 L30.6 507.8 L29.5 503.2 L29.2 498.6 L29.8 494.0" stroke="#18c018" stroke-width="1.25" fill="none"/>
<path d="M876.0 351.0 L885.4 351.5 L894.4 352.3 L903.0 353.3 L911.1 354.6 L918.9 356.1 L926.2 357.8 L933.0 359.8 L939.3 362.0 L945.1 364.4 L950.5 367.0 L955.3 369.8 L959.5 372.8 L963.2 376.0 L966.4 379.4 L968.9 382.9 L970.9 386.5 L972.3 390.4 L973.0 394.3 L973.1 398.4 L972.5 402.6" stroke="#18c018" stroke-width="1.25" fill="none" stroke-dasharray="1.5 5" stroke-opacity="0.8"/>
<path d="M945.6 523.6 L944.1 529.3 L941.9 534.8 L939.2 540.0 L935.9 545.0 L932.1 549.8 L927.7 554.2 L922.8 558.4 L917.4 562.3 L911.6 566.0 L905.3 569.3 L898.5 572.3 L891.3 575.0 L883.7 577.4 L875.8 579.4 L867.5 581.1 L858.8 582.5 L849.8 583.5 L840.5 584.1 L830.9 584.3 L821.0 584.1" stroke="#18c018" stroke-width="1.25" fill="none" stroke-dasharray="1.5 5" stroke-opacity="0.8"/>
<path d="M193.0 328.5 L484.8 339.5" stroke="#2f54b8" stroke-width="1.25" fill="none"/>
<path d="M579.0 343.1 L876.0 354.3" stroke="#2f54b8" stroke-width="1.25" fill="none"/>
<path d="M972.5 405.9 L945.6 526.9" stroke="#2f54b8" stroke-width="1.25" fill="none"/>
<path d="M821.0 587.4 L811.0 587.0" stroke="#2f54b8" stroke-width="1.25" fill="none"/>
<path d="M721.0 583.8 L135.5 562.7" stroke="#2f54b8" stroke-width="1.25" fill="none"/>
<path d="M29.8 497.3 L33.5 480.9" stroke="#2f54b8" stroke-width="1.25" fill="none"/>
<path d="M48.0 415.9 L54.5 386.9" stroke="#2f54b8" stroke-width="1.25" fill="none"/>
<path d="M876.0 354.3 L885.4 354.8 L894.4 355.5 L903.0 356.6 L911.1 357.8 L918.9 359.3 L926.2 361.1 L933.0 363.1 L939.3 365.3 L945.1 367.7 L950.5 370.3 L955.3 373.1 L959.5 376.1 L963.2 379.3 L966.4 382.6 L968.9 386.1 L970.9 389.8 L972.3 393.6 L973.0 397.6 L973.1 401.7 L972.5 405.9" stroke="#2f54b8" stroke-width="1.25" fill="none"/>
<path d="M945.6 526.9 L944.1 532.6 L941.9 538.1 L939.2 543.3 L935.9 548.3 L932.1 553.0 L927.7 557.5 L922.8 561.7 L917.4 565.6 L911.6 569.2 L905.3 572.6 L898.5 575.6 L891.3 578.3 L883.7 580.7 L875.8 582.7 L867.5 584.4 L858.8 585.8 L849.8 586.7 L840.5 587.3 L830.9 587.6 L821.0 587.4" stroke="#2f54b8" stroke-width="1.25" fill="none"/>
<path d="M54.5 386.9 L56.1 381.8 L58.4 376.8 L61.5 371.9 L65.3 367.2 L69.8 362.8 L74.9 358.5 L80.6 354.4 L86.9 350.6 L93.7 347.0 L101.0 343.7 L108.7 340.7 L116.9 337.9 L125.5 335.5 L134.4 333.4 L143.6 331.6 L153.1 330.2 L162.8 329.2 L172.7 328.5 L182.8 328.3 L193.0 328.5" stroke="#18c018" stroke-width="1.25" fill="none"/>
<path d="M135.5 562.7 L126.6 562.1 L117.9 561.2 L109.3 559.8 L100.9 558.0 L92.9 555.9 L85.1 553.4 L77.6 550.6 L70.6 547.5 L63.9 544.2 L57.7 540.7 L52.0 536.9 L46.9 532.9 L42.3 528.8 L38.4 524.5 L35.1 520.1 L32.5 515.6 L30.6 511.1 L29.5 506.5 L29.2 501.9 L29.8 497.3" stroke="#18c018" stroke-width="1.25" fill="none"/>
<path d="M876.0 354.3 L885.4 354.8 L894.4 355.5 L903.0 356.6 L911.1 357.8 L918.9 359.3 L926.2 361.1 L933.0 363.1 L939.3 365.3 L945.1 367.7 L950.5 370.3 L955.3 373.1 L959.5 376.1 L963.2 379.3 L966.4 382.6 L968.9 386.1 L970.9 389.8 L972.3 393.6 L973.0 397.6 L973.1 401.7 L972.5 405.9" stroke="#18c018" stroke-width="1.25" fill="none" stroke-dasharray="1.5 5" stroke-opacity="0.8"/>
<path d="M945.6 526.9 L944.1 532.6 L941.9 538.1 L939.2 543.3 L935.9 548.3 L932.1 553.0 L927.7 557.5 L922.8 561.7 L917.4 565.6 L911.6 569.2 L905.3 572.6 L898.5 575.6 L891.3 578.3 L883.7 580.7 L875.8 582.7 L867.5 584.4 L858.8 585.8 L849.8 586.7 L840.5 587.3 L830.9 587.6 L821.0 587.4" stroke="#18c018" stroke-width="1.25" fill="none" stroke-dasharray="1.5 5" stroke-opacity="0.8"/>
<path d="M193.0 331.7 L484.8 342.8" stroke="#2f54b8" stroke-width="1.25" fill="none"/>
<path d="M579.0 346.3 L876.0 357.5" stroke="#2f54b8" stroke-width="1.25" fill="none"/>
<path d="M972.5 409.2 L945.6 530.2" stroke="#2f54b8" stroke-width="1.25" fill="none"/>
<path d="M821.0 590.7 L811.0 590.3" stroke="#2f54b8" stroke-width="1.25" fill="none"/>
<path d="M721.0 587.0 L135.5 566.0" stroke="#2f54b8" stroke-width="1.25" fill="none"/>
<path d="M29.8 500.6 L33.5 484.2" stroke="#2f54b8" stroke-width="1.25" fill="none"/>
<path d="M48.0 419.2 L54.5 390.2" stroke="#2f54b8" stroke-width="1.25" fill="none"/>
<path d="M876.0 357.5 L885.4 358.0 L894.4 358.8 L903.0 359.8 L911.1 361.1 L918.9 362.6 L926.2 364.4 L933.0 366.3 L939.3 368.5 L945.1 370.9 L950.5 373.5 L955.3 376.4 L959.5 379.4 L963.2 382.5 L966.4 385.9 L968.9 389.4 L970.9 393.1 L972.3 396.9 L973.0 400.9 L973.1 404.9 L972.5 409.2" stroke="#2f54b8" stroke-width="1.25" fill="none"/>
<path d="M945.6 530.2 L944.1 535.9 L941.9 541.3 L939.2 546.6 L935.9 551.6 L932.1 556.3 L927.7 560.8 L922.8 565.0 L917.4 568.9 L911.6 572.5 L905.3 575.8 L898.5 578.9 L891.3 581.6 L883.7 583.9 L875.8 586.0 L867.5 587.7 L858.8 589.0 L849.8 590.0 L840.5 590.6 L830.9 590.8 L821.0 590.7" stroke="#2f54b8" stroke-width="1.25" fill="none"/>
<path d="M54.5 390.2 L56.1 385.0 L58.4 380.0 L61.5 375.2 L65.3 370.5 L69.8 366.0 L74.9 361.7 L80.6 357.7 L86.9 353.9 L93.7 350.3 L101.0 347.0 L108.7 343.9 L116.9 341.2 L125.5 338.8 L134.4 336.7 L143.6 334.9 L153.1 333.5 L162.8 332.5 L172.7 331.8 L182.8 331.6 L193.0 331.7" stroke="#18c018" stroke-width="1.25" fill="none"/>
<path d="M135.5 566.0 L126.6 565.4 L117.9 564.4 L109.3 563.0 L100.9 561.3 L92.9 559.1 L85.1 556.7 L77.6 553.9 L70.6 550.8 L63.9 547.5 L57.7 543.9 L52.0 540.1 L46.9 536.2 L42.3 532.0 L38.4 527.8 L35.1 523.4 L32.5 518.9 L30.6 514.4 L29.5 509.8 L29.2 505.2 L29.8 500.6" stroke="#18c018" stroke-width="1.25" fill="none"/>
<path d="M876.0 357.5 L885.4 358.0 L894.4 358.8 L903.0 359.8 L911.1 361.1 L918.9 362.6 L926.2 364.4 L933.0 366.3 L939.3 368.5 L945.1 370.9 L950.5 373.5 L955.3 376.4 L959.5 379.4 L963.2 382.5 L966.4 385.9 L968.9 389.4 L970.9 393.1 L972.3 396.9 L973.0 400.9 L973.1 404.9 L972.5 409.2" stroke="#18c018" stroke-width="1.25" fill="none" stroke-dasharray="1.5 5" stroke-opacity="0.8"/>
<path d="M945.6 530.2 L944.1 535.9 L941.9 541.3 L939.2 546.6 L935.9 551.6 L932.1 556.3 L927.7 560.8 L922.8 565.0 L917.4 568.9 L911.6 572.5 L905.3 575.8 L898.5 578.9 L891.3 581.6 L883.7 583.9 L875.8 586.0 L867.5 587.7 L858.8 589.0 L849.8 590.0 L840.5 590.6 L830.9 590.8 L821.0 590.7" stroke="#18c018" stroke-width="1.25" fill="none" stroke-dasharray="1.5 5" stroke-opacity="0.8"/>
<path d="M193.0 335.0 L484.8 346.0" stroke="#2f54b8" stroke-width="1.25" fill="none"/>
<path d="M579.0 349.6 L876.0 360.8" stroke="#2f54b8" stroke-width="1.25" fill="none"/>
<path d="M972.5 412.4 L945.6 533.4" stroke="#2f54b8" stroke-width="1.25" fill="none"/>
<path d="M821.0 593.9 L811.0 593.5" stroke="#2f54b8" stroke-width="1.25" fill="none"/>
<path d="M721.0 590.3 L135.5 569.2" stroke="#2f54b8" stroke-width="1.25" fill="none"/>
<path d="M29.8 503.8 L33.5 487.4" stroke="#2f54b8" stroke-width="1.25" fill="none"/>
<path d="M48.0 422.4 L54.5 393.4" stroke="#2f54b8" stroke-width="1.25" fill="none"/>
<path d="M876.0 360.8 L885.4 361.3 L894.4 362.1 L903.0 363.1 L911.1 364.4 L918.9 365.9 L926.2 367.6 L933.0 369.6 L939.3 371.8 L945.1 374.2 L950.5 376.8 L955.3 379.6 L959.5 382.6 L963.2 385.8 L966.4 389.1 L968.9 392.7 L970.9 396.3 L972.3 400.2 L973.0 404.1 L973.1 408.2 L972.5 412.4" stroke="#2f54b8" stroke-width="1.25" fill="none"/>
<path d="M945.6 533.4 L944.1 539.1 L941.9 544.6 L939.2 549.8 L935.9 554.8 L932.1 559.6 L927.7 564.0 L922.8 568.2 L917.4 572.1 L911.6 575.8 L905.3 579.1 L898.5 582.1 L891.3 584.8 L883.7 587.2 L875.8 589.2 L867.5 590.9 L858.8 592.3 L849.8 593.3 L840.5 593.9 L830.9 594.1 L821.0 593.9" stroke="#2f54b8" stroke-width="1.25" fill="none"/>
<path d="M54.5 393.4 L56.1 388.3 L58.4 383.3 L61.5 378.4 L65.3 373.8 L69.8 369.3 L74.9 365.0 L80.6 361.0 L86.9 357.1 L93.7 353.5 L101.0 350.2 L108.7 347.2 L116.9 344.5 L125.5 342.0 L134.4 339.9 L143.6 338.2 L153.1 336.8 L162.8 335.7 L172.7 335.1 L182.8 334.8 L193.0 335.0" stroke="#18c018" stroke-width="1.25" fill="none"/>
<path d="M135.5 569.2 L126.6 568.7 L117.9 567.7 L109.3 566.3 L100.9 564.5 L92.9 562.4 L85.1 559.9 L77.6 557.1 L70.6 554.1 L63.9 550.7 L57.7 547.2 L52.0 543.4 L46.9 539.4 L42.3 535.3 L38.4 531.0 L35.1 526.6 L32.5 522.2 L30.6 517.6 L29.5 513.0 L29.2 508.4 L29.8 503.8" stroke="#18c018" stroke-width="1.25" fill="none"/>
<path d="M876.0 360.8 L885.4 361.3 L894.4 362.1 L903.0 363.1 L911.1 364.4 L918.9 365.9 L926.2 367.6 L933.0 369.6 L939.3 371.8 L945.1 374.2 L950.5 376.8 L955.3 379.6 L959.5 382.6 L963.2 385.8 L966.4 389.1 L968.9 392.7 L970.9 396.3 L972.3 400.2 L973.0 404.1 L973.1 408.2 L972.5 412.4" stroke="#18c018" stroke-width="1.25" fill="none" stroke-dasharray="1.5 5" stroke-opacity="0.8"/>
<path d="M945.6 533.4 L944.1 539.1 L941.9 544.6 L939.2 549.8 L935.9 554.8 L932.1 559.6 L927.7 564.0 L922.8 568.2 L917.4 572.1 L911.6 575.8 L905.3 579.1 L898.5 582.1 L891.3 584.8 L883.7 587.2 L875.8 589.2 L867.5 590.9 L858.8 592.3 L849.8 593.3 L840.5 593.9 L830.9 594.1 L821.0 593.9" stroke="#18c018" stroke-width="1.25" fill="none" stroke-dasharray="1.5 5" stroke-opacity="0.8"/>
<path d="M193.0 338.3 L484.8 349.3" stroke="#2f54b8" stroke-width="1.25" fill="none"/>
<path d="M579.0 352.8 L876.0 364.1" stroke="#2f54b8" stroke-width="1.25" fill="none"/>
<path d="M972.5 415.7 L945.6 536.7" stroke="#2f54b8" stroke-width="1.25" fill="none"/>
<path d="M821.0 597.2 L811.0 596.8" stroke="#2f54b8" stroke-width="1.25" fill="none"/>
<path d="M721.0 593.6 L135.5 572.5" stroke="#2f54b8" stroke-width="1.25" fill="none"/>
<path d="M29.8 507.1 L33.5 490.7" stroke="#2f54b8" stroke-width="1.25" fill="none"/>
<path d="M48.0 425.7 L54.5 396.7" stroke="#2f54b8" stroke-width="1.25" fill="none"/>
<path d="M876.0 364.1 L885.4 364.6 L894.4 365.3 L903.0 366.3 L911.1 367.6 L918.9 369.1 L926.2 370.9 L933.0 372.9 L939.3 375.1 L945.1 377.5 L950.5 380.1 L955.3 382.9 L959.5 385.9 L963.2 389.1 L966.4 392.4 L968.9 395.9 L970.9 399.6 L972.3 403.4 L973.0 407.4 L973.1 411.5 L972.5 415.7" stroke="#2f54b8" stroke-width="1.25" fill="none"/>
<path d="M945.6 536.7 L944.1 542.4 L941.9 547.9 L939.2 553.1 L935.9 558.1 L932.1 562.8 L927.7 567.3 L922.8 571.5 L917.4 575.4 L911.6 579.0 L905.3 582.4 L898.5 585.4 L891.3 588.1 L883.7 590.5 L875.8 592.5 L867.5 594.2 L858.8 595.5 L849.8 596.5 L840.5 597.1 L830.9 597.4 L821.0 597.2" stroke="#2f54b8" stroke-width="1.25" fill="none"/>
<path d="M54.5 396.7 L56.1 391.6 L58.4 386.6 L61.5 381.7 L65.3 377.0 L69.8 372.6 L74.9 368.3 L80.6 364.2 L86.9 360.4 L93.7 356.8 L101.0 353.5 L108.7 350.5 L116.9 347.7 L125.5 345.3 L134.4 343.2 L143.6 341.4 L153.1 340.0 L162.8 339.0 L172.7 338.3 L182.8 338.1 L193.0 338.3" stroke="#18c018" stroke-width="1.25" fill="none"/>
<path d="M135.5 572.5 L126.6 571.9 L117.9 571.0 L109.3 569.6 L100.9 567.8 L92.9 565.7 L85.1 563.2 L77.6 560.4 L70.6 557.3 L63.9 554.0 L57.7 550.4 L52.0 546.7 L46.9 542.7 L42.3 538.6 L38.4 534.3 L35.1 529.9 L32.5 525.4 L30.6 520.9 L29.5 516.3 L29.2 511.7 L29.8 507.1" stroke="#18c018" stroke-width="1.25" fill="none"/>
<path d="M876.0 364.1 L885.4 364.6 L894.4 365.3 L903.0 366.3 L911.1 367.6 L918.9 369.1 L926.2 370.9 L933.0 372.9 L939.3 375.1 L945.1 377.5 L950.5 380.1 L955.3 382.9 L959.5 385.9 L963.2 389.1 L966.4 392.4 L968.9 395.9 L970.9 399.6 L972.3 403.4 L973.0 407.4 L973.1 411.5 L972.5 415.7" stroke="#18c018" stroke-width="1.25" fill="none" stroke-dasharray="1.5 5" stroke-opacity="0.8"/>
<path d="M945.6 536.7 L944.1 542.4 L941.9 547.9 L939.2 553.1 L935.9 558.1 L932.1 562.8 L927.7 567.3 L922.8 571.5 L917.4 575.4 L911.6 579.0 L905.3 582.4 L898.5 585.4 L891.3 588.1 L883.7 590.5 L875.8 592.5 L867.5 594.2 L858.8 595.5 L849.8 596.5 L840.5 597.1 L830.9 597.4 L821.0 597.2" stroke="#18c018" stroke-width="1.25" fill="none" stroke-dasharray="1.5 5" stroke-opacity="0.8"/>
<path d="M492.0 382.3 L799.0 394.0" stroke="#2c4a9c" stroke-width="1.25" fill="none"/>
<path d="M799.0 394.0 L781.0 470.0" stroke="#2c4a9c" stroke-width="1.25" fill="none"/>
<path d="M781.0 470.0 L476.0 460.2" stroke="#2c4a9c" stroke-width="1.25" fill="none"/>
<path d="M467.5 454.0 L481.0 392.0" stroke="#2c4a9c" stroke-width="1.25" fill="none"/>
<path d="M481.0 392.0 L481.1 391.0 L481.2 389.4 L481.5 387.8 L482.0 386.5 L482.7 385.5 L483.7 384.6 L484.8 383.9 L486.0 383.3 L487.5 382.9 L489.2 382.6 L490.9 382.4 L492.0 382.3" stroke="#18a018" stroke-width="1.25" fill="none"/>
<path d="M476.0 460.2 L474.8 460.1 L473.2 460.0 L471.4 459.8 L470.0 459.5 L469.0 459.0 L468.3 458.4 L467.7 457.7 L467.3 457.0 L467.2 456.2 L467.2 455.3 L467.4 454.6 L467.5 454.0" stroke="#18a018" stroke-width="1.25" fill="none"/>
<path d="M492.0 385.6 L799.0 397.3" stroke="#2c4a9c" stroke-width="1.25" fill="none"/>
<path d="M799.0 397.3 L781.0 473.3" stroke="#2c4a9c" stroke-width="1.25" fill="none"/>
<path d="M781.0 473.3 L476.0 463.5" stroke="#2c4a9c" stroke-width="1.25" fill="none"/>
<path d="M467.5 457.3 L481.0 395.3" stroke="#2c4a9c" stroke-width="1.25" fill="none"/>
<path d="M481.0 395.3 L481.1 394.2 L481.2 392.7 L481.5 391.1 L482.0 389.8 L482.7 388.8 L483.7 387.9 L484.8 387.2 L486.0 386.6 L487.5 386.1 L489.2 385.9 L490.9 385.7 L492.0 385.6" stroke="#18a018" stroke-width="1.25" fill="none"/>
<path d="M476.0 463.5 L474.8 463.4 L473.2 463.3 L471.4 463.1 L470.0 462.8 L469.0 462.3 L468.3 461.7 L467.7 461.0 L467.3 460.3 L467.2 459.5 L467.2 458.6 L467.4 457.8 L467.5 457.3" stroke="#18a018" stroke-width="1.25" fill="none"/>
<path d="M492.0 388.8 L799.0 400.5" stroke="#2c4a9c" stroke-width="1.25" fill="none"/>
<path d="M799.0 400.5 L781.0 476.5" stroke="#2c4a9c" stroke-width="1.25" fill="none"/>
<path d="M781.0 476.5 L476.0 466.7" stroke="#2c4a9c" stroke-width="1.25" fill="none"/>
<path d="M467.5 460.5 L481.0 398.5" stroke="#2c4a9c" stroke-width="1.25" fill="none"/>
<path d="M481.0 398.5 L481.1 397.5 L481.2 396.0 L481.5 394.4 L482.0 393.0 L482.7 392.0 L483.7 391.1 L484.8 390.4 L486.0 389.8 L487.5 389.4 L489.2 389.1 L490.9 389.0 L492.0 388.8" stroke="#18a018" stroke-width="1.25" fill="none"/>
<path d="M476.0 466.7 L474.8 466.6 L473.2 466.5 L471.4 466.3 L470.0 466.0 L469.0 465.5 L468.3 464.9 L467.7 464.2 L467.3 463.5 L467.2 462.7 L467.2 461.9 L467.4 461.1 L467.5 460.5" stroke="#18a018" stroke-width="1.25" fill="none"/>
<path d="M492.0 392.1 L799.0 403.8" stroke="#2c4a9c" stroke-width="1.25" fill="none"/>
<path d="M799.0 403.8 L781.0 479.8" stroke="#2c4a9c" stroke-width="1.25" fill="none"/>
<path d="M781.0 479.8 L476.0 470.0" stroke="#2c4a9c" stroke-width="1.25" fill="none"/>
<path d="M467.5 463.8 L481.0 401.8" stroke="#2c4a9c" stroke-width="1.25" fill="none"/>
<path d="M481.0 401.8 L481.1 400.8 L481.2 399.2 L481.5 397.6 L482.0 396.3 L482.7 395.3 L483.7 394.4 L484.8 393.7 L486.0 393.1 L487.5 392.7 L489.2 392.4 L490.9 392.2 L492.0 392.1" stroke="#18a018" stroke-width="1.25" fill="none"/>
<path d="M476.0 470.0 L474.8 469.9 L473.2 469.8 L471.4 469.6 L470.0 469.3 L469.0 468.8 L468.3 468.2 L467.7 467.5 L467.3 466.8 L467.2 466.0 L467.2 465.1 L467.4 464.3 L467.5 463.8" stroke="#18a018" stroke-width="1.25" fill="none"/>
<path d="M492.0 395.4 L799.0 407.1" stroke="#2c4a9c" stroke-width="1.25" fill="none"/>
<path d="M799.0 407.1 L781.0 483.1" stroke="#2c4a9c" stroke-width="1.25" fill="none"/>
<path d="M781.0 483.1 L476.0 473.3" stroke="#2c4a9c" stroke-width="1.25" fill="none"/>
<path d="M467.5 467.1 L481.0 405.1" stroke="#2c4a9c" stroke-width="1.25" fill="none"/>
<path d="M481.0 405.1 L481.1 404.0 L481.2 402.5 L481.5 400.9 L482.0 399.6 L482.7 398.5 L483.7 397.7 L484.8 396.9 L486.0 396.4 L487.5 395.9 L489.2 395.7 L490.9 395.5 L492.0 395.4" stroke="#18a018" stroke-width="1.25" fill="none"/>
<path d="M476.0 473.3 L474.8 473.2 L473.2 473.1 L471.4 472.9 L470.0 472.6 L469.0 472.1 L468.3 471.5 L467.7 470.8 L467.3 470.1 L467.2 469.3 L467.2 468.4 L467.4 467.6 L467.5 467.1" stroke="#18a018" stroke-width="1.25" fill="none"/>
<path d="M492.0 398.6 L799.0 410.3" stroke="#2c4a9c" stroke-width="1.25" fill="none"/>
<path d="M799.0 410.3 L781.0 486.3" stroke="#2c4a9c" stroke-width="1.25" fill="none"/>
<path d="M781.0 486.3 L476.0 476.5" stroke="#2c4a9c" stroke-width="1.25" fill="none"/>
<path d="M467.5 470.3 L481.0 408.3" stroke="#2c4a9c" stroke-width="1.25" fill="none"/>
<path d="M481.0 408.3 L481.1 407.3 L481.2 405.8 L481.5 404.2 L482.0 402.8 L482.7 401.8 L483.7 400.9 L484.8 400.2 L486.0 399.6 L487.5 399.2 L489.2 398.9 L490.9 398.7 L492.0 398.6" stroke="#18a018" stroke-width="1.25" fill="none"/>
<path d="M476.0 476.5 L474.8 476.4 L473.2 476.3 L471.4 476.1 L470.0 475.8 L469.0 475.3 L468.3 474.7 L467.7 474.0 L467.3 473.3 L467.2 472.5 L467.2 471.7 L467.4 470.9 L467.5 470.3" stroke="#18a018" stroke-width="1.25" fill="none"/>
<path d="M492.0 401.9 L799.0 413.6" stroke="#2c4a9c" stroke-width="1.25" fill="none"/>
<path d="M799.0 413.6 L781.0 489.6" stroke="#2c4a9c" stroke-width="1.25" fill="none"/>
<path d="M781.0 489.6 L476.0 479.8" stroke="#2c4a9c" stroke-width="1.25" fill="none"/>
<path d="M467.5 473.6 L481.0 411.6" stroke="#2c4a9c" stroke-width="1.25" fill="none"/>
<path d="M481.0 411.6 L481.1 410.5 L481.2 409.0 L481.5 407.4 L482.0 406.1 L482.7 405.1 L483.7 404.2 L484.8 403.5 L486.0 402.9 L487.5 402.5 L489.2 402.2 L490.9 402.0 L492.0 401.9" stroke="#18a018" stroke-width="1.25" fill="none"/>
<path d="M476.0 479.8 L474.8 479.7 L473.2 479.6 L471.4 479.4 L470.0 479.1 L469.0 478.6 L468.3 478.0 L467.7 477.3 L467.3 476.6 L467.2 475.8 L467.2 474.9 L467.4 474.1 L467.5 473.6" stroke="#18a018" stroke-width="1.25" fill="none"/>
<path d="M492.0 405.2 L799.0 416.9" stroke="#2c4a9c" stroke-width="1.25" fill="none"/>
<path d="M799.0 416.9 L781.0 492.9" stroke="#2c4a9c" stroke-width="1.25" fill="none"/>
<path d="M781.0 492.9 L476.0 483.1" stroke="#2c4a9c" stroke-width="1.25" fill="none"/>
<path d="M467.5 476.9 L481.0 414.9" stroke="#2c4a9c" stroke-width="1.25" fill="none"/>
<path d="M481.0 414.9 L481.1 413.8 L481.2 412.3 L481.5 410.7 L482.0 409.4 L482.7 408.3 L483.7 407.5 L484.8 406.7 L486.0 406.2 L487.5 405.7 L489.2 405.5 L490.9 405.3 L492.0 405.2" stroke="#18a018" stroke-width="1.25" fill="none"/>
<path d="M476.0 483.1 L474.8 483.0 L473.2 482.9 L471.4 482.7 L470.0 482.4 L469.0 481.9 L468.3 481.2 L467.7 480.6 L467.3 479.9 L467.2 479.1 L467.2 478.2 L467.4 477.4 L467.5 476.9" stroke="#18a018" stroke-width="1.25" fill="none"/>
<path d="M492.0 408.4 L799.0 420.1" stroke="#2c4a9c" stroke-width="1.25" fill="none"/>
<path d="M799.0 420.1 L781.0 496.1" stroke="#2c4a9c" stroke-width="1.25" fill="none"/>
<path d="M781.0 496.1 L476.0 486.3" stroke="#2c4a9c" stroke-width="1.25" fill="none"/>
<path d="M467.5 480.1 L481.0 418.1" stroke="#2c4a9c" stroke-width="1.25" fill="none"/>
<path d="M481.0 418.1 L481.1 417.1 L481.2 415.6 L481.5 414.0 L482.0 412.6 L482.7 411.6 L483.7 410.7 L484.8 410.0 L486.0 409.4 L487.5 409.0 L489.2 408.7 L490.9 408.5 L492.0 408.4" stroke="#18a018" stroke-width="1.25" fill="none"/>
<path d="M476.0 486.3 L474.8 486.2 L473.2 486.1 L471.4 485.9 L470.0 485.6 L469.0 485.1 L468.3 484.5 L467.7 483.8 L467.3 483.1 L467.2 482.3 L467.2 481.5 L467.4 480.7 L467.5 480.1" stroke="#18a018" stroke-width="1.25" fill="none"/>
<path d="M492.0 411.7 L799.0 423.4" stroke="#2c4a9c" stroke-width="1.25" fill="none"/>
<path d="M799.0 423.4 L781.0 499.4" stroke="#2c4a9c" stroke-width="1.25" fill="none"/>
<path d="M781.0 499.4 L476.0 489.6" stroke="#2c4a9c" stroke-width="1.25" fill="none"/>
<path d="M467.5 483.4 L481.0 421.4" stroke="#2c4a9c" stroke-width="1.25" fill="none"/>
<path d="M481.0 421.4 L481.1 420.3 L481.2 418.8 L481.5 417.2 L482.0 415.9 L482.7 414.9 L483.7 414.0 L484.8 413.3 L486.0 412.7 L487.5 412.3 L489.2 412.0 L490.9 411.8 L492.0 411.7" stroke="#18a018" stroke-width="1.25" fill="none"/>
<path d="M476.0 489.6 L474.8 489.5 L473.2 489.4 L471.4 489.2 L470.0 488.9 L469.0 488.4 L468.3 487.8 L467.7 487.1 L467.3 486.4 L467.2 485.6 L467.2 484.7 L467.4 483.9 L467.5 483.4" stroke="#18a018" stroke-width="1.25" fill="none"/>
<path d="M492.0 414.9 L799.0 426.6" stroke="#2c4a9c" stroke-width="1.25" fill="none"/>
<path d="M799.0 426.6 L781.0 502.6" stroke="#2c4a9c" stroke-width="1.25" fill="none"/>
<path d="M781.0 502.6 L476.0 492.8" stroke="#2c4a9c" stroke-width="1.25" fill="none"/>
<path d="M467.5 486.6 L481.0 424.6" stroke="#2c4a9c" stroke-width="1.25" fill="none"/>
<path d="M481.0 424.6 L481.1 423.6 L481.2 422.1 L481.5 420.5 L482.0 419.1 L482.7 418.1 L483.7 417.3 L484.8 416.5 L486.0 415.9 L487.5 415.5 L489.2 415.2 L490.9 415.1 L492.0 414.9" stroke="#18a018" stroke-width="1.25" fill="none"/>
<path d="M476.0 492.8 L474.8 492.8 L473.2 492.6 L471.4 492.5 L470.0 492.1 L469.0 491.7 L468.3 491.0 L467.7 490.3 L467.3 489.6 L467.2 488.9 L467.2 488.0 L467.4 487.2 L467.5 486.6" stroke="#18a018" stroke-width="1.25" fill="none"/>
<path d="M492.0 418.2 L799.0 429.9" stroke="#2c4a9c" stroke-width="1.25" fill="none"/>
<path d="M799.0 429.9 L781.0 505.9" stroke="#2c4a9c" stroke-width="1.25" fill="none"/>
<path d="M781.0 505.9 L476.0 496.1" stroke="#2c4a9c" stroke-width="1.25" fill="none"/>
<path d="M467.5 489.9 L481.0 427.9" stroke="#2c4a9c" stroke-width="1.25" fill="none"/>
<path d="M481.0 427.9 L481.1 426.9 L481.2 425.4 L481.5 423.7 L482.0 422.4 L482.7 421.4 L483.7 420.5 L484.8 419.8 L486.0 419.2 L487.5 418.8 L489.2 418.5 L490.9 418.3 L492.0 418.2" stroke="#18a018" stroke-width="1.25" fill="none"/>
<path d="M476.0 496.1 L474.8 496.0 L473.2 495.9 L471.4 495.7 L470.0 495.4 L469.0 494.9 L468.3 494.3 L467.7 493.6 L467.3 492.9 L467.2 492.1 L467.2 491.3 L467.4 490.5 L467.5 489.9" stroke="#18a018" stroke-width="1.25" fill="none"/>
<path d="M492.0 421.5 L799.0 433.2" stroke="#2c4a9c" stroke-width="1.25" fill="none"/>
<path d="M799.0 433.2 L781.0 509.2" stroke="#2c4a9c" stroke-width="1.25" fill="none"/>
<path d="M781.0 509.2 L476.0 499.4" stroke="#2c4a9c" stroke-width="1.25" fill="none"/>
<path d="M467.5 493.2 L481.0 431.2" stroke="#2c4a9c" stroke-width="1.25" fill="none"/>
<path d="M481.0 431.2 L481.1 430.1 L481.2 428.6 L481.5 427.0 L482.0 425.7 L482.7 424.7 L483.7 423.8 L484.8 423.1 L486.0 422.5 L487.5 422.0 L489.2 421.8 L490.9 421.6 L492.0 421.5" stroke="#18a018" stroke-width="1.25" fill="none"/>
<path d="M476.0 499.4 L474.8 499.3 L473.2 499.2 L471.4 499.0 L470.0 498.7 L469.0 498.2 L468.3 497.6 L467.7 496.9 L467.3 496.2 L467.2 495.4 L467.2 494.5 L467.4 493.7 L467.5 493.2" stroke="#18a018" stroke-width="1.25" fill="none"/>
<path d="M492.0 424.7 L799.0 436.4" stroke="#2c4a9c" stroke-width="1.25" fill="none"/>
<path d="M799.0 436.4 L781.0 512.4" stroke="#2c4a9c" stroke-width="1.25" fill="none"/>
<path d="M781.0 512.4 L476.0 502.6" stroke="#2c4a9c" stroke-width="1.25" fill="none"/>
<path d="M467.5 496.4 L481.0 434.4" stroke="#2c4a9c" stroke-width="1.25" fill="none"/>
<path d="M481.0 434.4 L481.1 433.4 L481.2 431.9 L481.5 430.3 L482.0 428.9 L482.7 427.9 L483.7 427.1 L484.8 426.3 L486.0 425.7 L487.5 425.3 L489.2 425.0 L490.9 424.9 L492.0 424.7" stroke="#18a018" stroke-width="1.25" fill="none"/>
<path d="M476.0 502.6 L474.8 502.6 L473.2 502.4 L471.4 502.3 L470.0 501.9 L469.0 501.4 L468.3 500.8 L467.7 500.1 L467.3 499.4 L467.2 498.7 L467.2 497.8 L467.4 497.0 L467.5 496.4" stroke="#18a018" stroke-width="1.25" fill="none"/>
<path d="M492.0 428.0 L799.0 439.7" stroke="#2c4a9c" stroke-width="1.25" fill="none"/>
<path d="M799.0 439.7 L781.0 515.7" stroke="#2c4a9c" stroke-width="1.25" fill="none"/>
<path d="M781.0 515.7 L476.0 505.9" stroke="#2c4a9c" stroke-width="1.25" fill="none"/>
<path d="M467.5 499.7 L481.0 437.7" stroke="#2c4a9c" stroke-width="1.25" fill="none"/>
<path d="M481.0 437.7 L481.1 436.7 L481.2 435.1 L481.5 433.5 L482.0 432.2 L482.7 431.2 L483.7 430.3 L484.8 429.6 L486.0 429.0 L487.5 428.6 L489.2 428.3 L490.9 428.1 L492.0 428.0" stroke="#18a018" stroke-width="1.25" fill="none"/>
<path d="M476.0 505.9 L474.8 505.8 L473.2 505.7 L471.4 505.5 L470.0 505.2 L469.0 504.7 L468.3 504.1 L467.7 503.4 L467.3 502.7 L467.2 501.9 L467.2 501.0 L467.4 500.3 L467.5 499.7" stroke="#18a018" stroke-width="1.25" fill="none"/>
<path d="M179.5 346.0 L150.0 480.5" stroke="#2d4ea8" stroke-width="1" fill="none" stroke-opacity="0.75"/>
<path d="M179.5 349.3 L150.0 483.8" stroke="#2d4ea8" stroke-width="1" fill="none" stroke-opacity="0.75"/>
<path d="M179.5 352.5 L150.0 487.0" stroke="#2d4ea8" stroke-width="1" fill="none" stroke-opacity="0.75"/>
<path d="M179.5 355.8 L150.0 490.3" stroke="#2d4ea8" stroke-width="1" fill="none" stroke-opacity="0.75"/>
<path d="M179.5 359.1 L150.0 493.6" stroke="#2d4ea8" stroke-width="1" fill="none" stroke-opacity="0.75"/>
<path d="M179.5 362.3 L150.0 496.8" stroke="#2d4ea8" stroke-width="1" fill="none" stroke-opacity="0.75"/>
<path d="M179.5 365.6 L150.0 500.1" stroke="#2d4ea8" stroke-width="1" fill="none" stroke-opacity="0.75"/>
<path d="M179.5 368.9 L150.0 503.4" stroke="#2d4ea8" stroke-width="1" fill="none" stroke-opacity="0.75"/>
<path d="M179.5 372.1 L150.0 506.6" stroke="#2d4ea8" stroke-width="1" fill="none" stroke-opacity="0.75"/>
<path d="M179.5 375.4 L150.0 509.9" stroke="#2d4ea8" stroke-width="1" fill="none" stroke-opacity="0.75"/>
<path d="M179.5 378.6 L150.0 513.1" stroke="#2d4ea8" stroke-width="1" fill="none" stroke-opacity="0.75"/>
<path d="M179.5 381.9 L150.0 516.4" stroke="#2d4ea8" stroke-width="1" fill="none" stroke-opacity="0.75"/>
<path d="M179.5 385.2 L150.0 519.7" stroke="#2d4ea8" stroke-width="1" fill="none" stroke-opacity="0.75"/>
<path d="M179.5 388.4 L150.0 522.9" stroke="#2d4ea8" stroke-width="1" fill="none" stroke-opacity="0.75"/>
<path d="M179.5 391.7 L150.0 526.2" stroke="#2d4ea8" stroke-width="1" fill="none" stroke-opacity="0.75"/>
<path d="M 485.4 365.2 L 822.0 377.0 Q 830.3 377.3 828.9 383.7 L 809.3 475.7 Q 807.4 484.5 800.0 484.2 L 465.0 472.5 Q 434.2 471.4 438.6 452.0 L 454.0 384.0 Q 458.5 364.3 485.4 365.2 Z" stroke="#c4c4c4" stroke-width="1.1" fill="none"/>
<path d="M 150.0 336.0 C 152.0 326.0 164.0 321.4 177.8 321.4 C 190.0 321.4 205.0 325.0 207.0 335.0 L 176.6 480.6 C 173.0 491.0 159.0 496.2 146.5 496.2 C 134.0 496.2 118.0 492.0 119.0 481.8 Z" stroke="#c8c8c8" stroke-width="1.1" fill="none"/>
<path d="M80.9 352.0 L82.6 346.6 L85.0 341.3 L88.3 336.4 L92.3 331.7 L97.1 327.3 L102.5 323.2 L108.5 319.4 L115.2 316.0 L122.3 312.9 L130.0 310.3 L138.1 308.0 L146.7 306.2 L155.6 304.8 L164.8 303.9 L174.3 303.5 L184.0 303.6 L841.0 328.7 L853.8 329.4 L865.8 330.5 L877.0 332.0 L887.4 333.9 L897.0 336.2 L905.8 338.8 L913.7 341.8 L920.7 345.2 L926.8 348.9 L931.9 352.9 L936.2 357.2 L939.4 361.8 L941.7 366.7 L943.0 371.9 L943.2 377.3 L942.4 383.0 L917.6 490.0 L916.0 495.2 L913.6 500.1 L910.6 504.8 L906.9 509.2 L902.6 513.2 L897.7 517.0 L892.1 520.4 L886.1 523.5 L879.5 526.2 L872.4 528.6 L864.8 530.6 L856.8 532.2 L848.4 533.3 L839.6 534.1 L830.5 534.4 L821.0 534.3 L141.0 509.7 L130.8 509.1 L121.2 508.1 L112.1 506.8 L103.6 505.1 L95.8 503.1 L88.6 500.7 L82.0 498.0 L76.2 495.0 L71.1 491.8 L66.7 488.2 L63.1 484.4 L60.3 480.4 L58.3 476.1 L57.2 471.6 L56.9 466.9 L57.5 462.0 L80.9 352.0" stroke="#f01414" stroke-width="2.6" fill="none" stroke-linejoin="round"/>
<path d="M492.0 271.0 L585.0 274.0 L570.0 341.0 L478.0 337.5 L492.0 271.0" stroke="#f01414" stroke-width="2.4" fill="none" stroke-linejoin="round"/>
<path d="M-14.0 377.5 L117.9 382.0 L107.5 431.4 L-14.0 427.0" stroke="#f01414" stroke-width="2.4" fill="none" stroke-linejoin="round"/>
<path d="M728.9 509.7 L822.6 513.0 L813.0 577.7 L714.8 573.0 L728.9 509.7" stroke="#f01414" stroke-width="2.4" fill="none" stroke-linejoin="round"/>
<circle cx="529" cy="317" r="2.6" fill="#f01414"/>
<circle cx="71.69999999999999" cy="404.7" r="2.6" fill="#f01414"/>
<circle cx="771" cy="533" r="2.6" fill="#f01414"/>
<path d="M177.0 335.0 L177.0 288.0 L778.0 420.7 L782.0 470.0" stroke="#d0602c" stroke-width="1" fill="none" stroke-dasharray="1 1"/>
<path d="M482.7 220.5 L574.0 223.8" stroke="#2f54b8" stroke-width="2" fill="none"/>
<path d="M581.0 220.0 L575.0 224.0 L581.0 228.5" stroke="#f0e020" stroke-width="2" fill="none"/>
<path d="M44.5 300.0 L33.6 348.6" stroke="#2f54b8" stroke-width="2" fill="none"/>
<path d="M38.3 295.5 L45.0 300.0 L51.6 296.0" stroke="#f0e020" stroke-width="1.8" fill="none"/>
<path d="M719.0 466.0 L811.0 470.0" stroke="#2f54b8" stroke-width="2" fill="none"/>
<path d="M712.5 462.0 L719.0 466.0 L712.5 470.0" stroke="#f0e020" stroke-width="1.8" fill="none"/>
<path d="M187.5 291.0 L192.5 294.3 L187.5 297.6 L192.5 300.9 L187.5 304.2 L192.5 307.5 L187.5 310.8 L192.5 314.1 L187.5 317.4 L192.5 320.7 L187.5 324.0 L192.5 327.3 L187.5 330.6 L192.5 333.9 L187.5 337.2 L192.5 340.5" stroke="#f0e020" stroke-width="1.1" fill="none"/><path d="M192.5 291.0 L187.5 294.3 L192.5 297.6 L187.5 300.9 L192.5 304.2 L187.5 307.5 L192.5 310.8 L187.5 314.1 L192.5 317.4 L187.5 320.7 L192.5 324.0 L187.5 327.3 L192.5 330.6 L187.5 333.9 L192.5 337.2 L187.5 340.5" stroke="#f0e020" stroke-width="1.1" fill="none"/>
<path d="M486.5 302.0 L491.5 305.3 L486.5 308.6 L491.5 311.9 L486.5 315.2 L491.5 318.5 L486.5 321.8 L491.5 325.1 L486.5 328.4 L491.5 331.7 L486.5 335.0 L491.5 338.3 L486.5 341.6 L491.5 344.9 L486.5 348.2 L491.5 351.5" stroke="#f0e020" stroke-width="1.1" fill="none"/><path d="M491.5 302.0 L486.5 305.3 L491.5 308.6 L486.5 311.9 L491.5 315.2 L486.5 318.5 L491.5 321.8 L486.5 325.1 L491.5 328.4 L486.5 331.7 L491.5 335.0 L486.5 338.3 L491.5 341.6 L486.5 344.9 L491.5 348.2 L486.5 351.5" stroke="#f0e020" stroke-width="1.1" fill="none"/>
<path d="M38.5 431.0 L43.5 434.3 L38.5 437.6 L43.5 440.9 L38.5 444.2 L43.5 447.5 L38.5 450.8 L43.5 454.1 L38.5 457.4 L43.5 460.7 L38.5 464.0 L43.5 467.3 L38.5 470.6 L43.5 473.9" stroke="#f0e020" stroke-width="1.1" fill="none"/><path d="M43.5 431.0 L38.5 434.3 L43.5 437.6 L38.5 440.9 L43.5 444.2 L38.5 447.5 L43.5 450.8 L38.5 454.1 L43.5 457.4 L38.5 460.7 L43.5 464.0 L38.5 467.3 L43.5 470.6 L38.5 473.9" stroke="#f0e020" stroke-width="1.1" fill="none"/>
<path d="M782.5 470.0 L787.5 473.3 L782.5 476.6 L787.5 479.9 L782.5 483.2 L787.5 486.5 L782.5 489.8 L787.5 493.1 L782.5 496.4 L787.5 499.7 L782.5 503.0 L787.5 506.3 L782.5 509.6 L787.5 512.9 L782.5 516.2" stroke="#f0e020" stroke-width="1.1" fill="none"/><path d="M787.5 470.0 L782.5 473.3 L787.5 476.6 L782.5 479.9 L787.5 483.2 L782.5 486.5 L787.5 489.8 L782.5 493.1 L787.5 496.4 L782.5 499.7 L787.5 503.0 L782.5 506.3 L787.5 509.6 L782.5 512.9 L787.5 516.2" stroke="#f0e020" stroke-width="1.1" fill="none"/>
<path d="M808.5 550.0 L813.5 553.3 L808.5 556.6 L813.5 559.9 L808.5 563.2 L813.5 566.5 L808.5 569.8 L813.5 573.1 L808.5 576.4 L813.5 579.7 L808.5 583.0 L813.5 586.3 L808.5 589.6 L813.5 592.9 L808.5 596.2" stroke="#f0e020" stroke-width="1.1" fill="none"/><path d="M813.5 550.0 L808.5 553.3 L813.5 556.6 L808.5 559.9 L813.5 563.2 L808.5 566.5 L813.5 569.8 L808.5 573.1 L813.5 576.4 L808.5 579.7 L813.5 583.0 L808.5 586.3 L813.5 589.6 L808.5 592.9 L813.5 596.2" stroke="#f0e020" stroke-width="1.1" fill="none"/>
<path d="M176.0 335.0 L184.0 338.3 L176.0 341.6 L184.0 344.9 L176.0 348.2 L184.0 351.5 L176.0 354.8 L184.0 358.1 L176.0 361.4 L184.0 364.7 L176.0 368.0 L184.0 371.3 L176.0 374.6 L184.0 377.9 L176.0 381.2" stroke="#f0e020" stroke-width="1.1" fill="none"/><path d="M184.0 335.0 L176.0 338.3 L184.0 341.6 L176.0 344.9 L184.0 348.2 L176.0 351.5 L184.0 354.8 L176.0 358.1 L184.0 361.4 L176.0 364.7 L184.0 368.0 L176.0 371.3 L184.0 374.6 L176.0 377.9 L184.0 381.2" stroke="#f0e020" stroke-width="1.1" fill="none"/></svg></div>
<div class="a" style="left:284px;top:894px;width:996px;height:3px;background:#d4d0c8"></div><div class="a" style="left:284px;top:897px;width:996px;height:77px;background:#fff"></div><div class="a ll" style="left:285px;top:897px">Profondeur finale &gt; à Surface pièce: Modification de ''Profondeur finale'' = - Profondeur finale</div><div class="a ll" style="left:285px;top:910px">Erreur point de départ poly.</div><div class="a ll" style="left:285px;top:923px">Profondeur finale &gt; à Surface pièce: Modification de ''Profondeur finale'' = - Profondeur finale</div><div class="a ll" style="left:285px;top:936px">Profondeur finale &gt; à Surface pièce: Modification de ''Profondeur finale'' = - Profondeur finale</div><div class="a ll" style="left:285px;top:949px;width:995px;background:#316ac5;color:#fff">Profondeur finale &gt; à Surface pièce: Modification de ''Profondeur finale'' = - Profondeur finale</div>
<div class="a" style="left:0;top:974px;width:1280px;height:20px;background:#ece9d8"></div><div class="sp a" style="left:0;top:976px;width:913px"></div><div class="sp a" style="left:916px;top:976px;width:197px">Propriété modifiée</div><div class="sp a" style="left:1116px;top:976px;width:147px;text-align:right;padding-right:1px">3.0000, 4.0000</div><div class="a" style="left:0;top:993px;width:1280px;height:1px;background:#fff"></div><div class="a" style="left:0;top:994px;width:1280px;height:4px;background:linear-gradient(#2a5ec8,#3c80ec)"></div><div class="a" style="left:0;top:994px;width:132px;height:4px;background:linear-gradient(#3a8a3a 0,#7ab87a 2px,#98cc98)"></div><div class="a" style="left:1187px;top:994px;width:93px;height:4px;background:linear-gradient(#0c60d0,#10a0ec)"></div>
</body></html>
